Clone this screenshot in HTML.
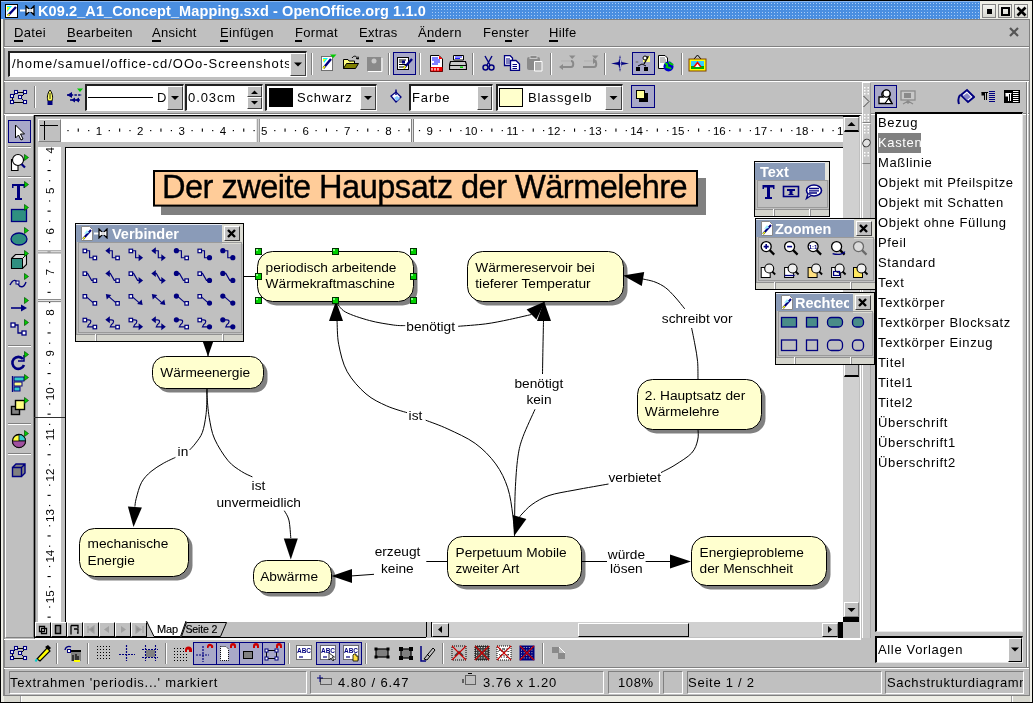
<!DOCTYPE html><html><head><meta charset="utf-8"><style>
html,body{margin:0;padding:0;}
body{width:1033px;height:703px;position:relative;overflow:hidden;will-change:transform;background:#c0c0c0;font-family:"Liberation Sans",sans-serif;}
div,svg{box-sizing:border-box;}
</style></head><body>
<div style="position:absolute;left:0px;top:0px;width:1033px;height:703px;background:#000"></div>
<div style="position:absolute;left:1px;top:1px;width:1031px;height:701px;background:#eeeee6"></div>
<div style="position:absolute;left:3px;top:19px;width:1027px;height:677px;background:#c0c0c0;border-left:2px solid #888;border-top:1px solid #808080;border-right:1px solid #808080;border-bottom:1px solid #808080"></div>
<div style="position:absolute;left:1px;top:1px;width:979px;height:18px;background-color:#4a8ee0"></div>
<div style="position:absolute;left:431px;top:2px;width:549px;height:17px;background-image:radial-gradient(circle at 1.5px 1.5px,#a8ccf8 0.6px,transparent 0.9px);background-size:3px 3px"></div>
<div style="position:absolute;left:1px;top:1px;width:979px;height:1px;background:#8cb8f0"></div>
<div style="position:absolute;left:38px;top:4px;font-size:14.5px;line-height:15px;font-weight:bold;color:#fff;white-space:nowrap;letter-spacing:0.1px">K09.2_A1_Concept_Mapping.sxd - OpenOffice.org 1.1.0</div>
<svg style="position:absolute;left:4px;top:3px;" width="15" height="16" viewBox="0 0 15 16"><rect x="1.5" y="1.5" width="12" height="13" fill="#fff" stroke="#000" stroke-width="1"/><path d="M3 3 L8 3 L3 9Z" fill="#0ff"/><path d="M3 4 H6 L3 8Z" fill="#ff0"/><path d="M4 12.5 L12 4" stroke="#00007f" stroke-width="2.4"/><path d="M3.5 13 L5.5 11" stroke="#ff0" stroke-width="1.6"/></svg>
<svg style="position:absolute;left:20px;top:5px;" width="15" height="11" viewBox="0 0 15 11"><path d="M0 5.5 H6" stroke="#fff" stroke-width="2"/><path d="M6 1 L9 4 V7 L6 10Z M14 1 L11 4 V7 L14 10Z" fill="#fff" stroke="#000" stroke-width="1.3"/><rect x="8" y="4" width="4" height="3" fill="#ddd"/></svg>
<div style="position:absolute;left:982px;top:4px;width:14px;height:14px;background:linear-gradient(#f4f4f0,#d8d8d0);border:1px solid #858585"></div>
<div style="position:absolute;left:998px;top:4px;width:14px;height:14px;background:linear-gradient(#f4f4f0,#d8d8d0);border:1px solid #858585"></div>
<div style="position:absolute;left:1014px;top:4px;width:14px;height:14px;background:linear-gradient(#f4f4f0,#d8d8d0);border:1px solid #858585"></div>
<div style="position:absolute;left:987px;top:9px;width:5px;height:5px;background:#000"></div>
<div style="position:absolute;left:1001px;top:7px;width:9px;height:9px;border:2px solid #000"></div>
<svg style="position:absolute;left:1016px;top:6px;" width="11" height="11" viewBox="0 0 11 11"><path d="M1.5 1.5 L9.5 9.5 M9.5 1.5 L1.5 9.5" stroke="#000" stroke-width="2.6"/></svg>
<div style="position:absolute;left:14px;top:26px;font-size:13px;line-height:13px;color:#000;white-space:nowrap;letter-spacing:0.3px">Datei</div>
<div style="position:absolute;left:67px;top:26px;font-size:13px;line-height:13px;color:#000;white-space:nowrap;letter-spacing:0.3px">Bearbeiten</div>
<div style="position:absolute;left:152px;top:26px;font-size:13px;line-height:13px;color:#000;white-space:nowrap;letter-spacing:0.3px">Ansicht</div>
<div style="position:absolute;left:220px;top:26px;font-size:13px;line-height:13px;color:#000;white-space:nowrap;letter-spacing:0.3px">Einfügen</div>
<div style="position:absolute;left:295px;top:26px;font-size:13px;line-height:13px;color:#000;white-space:nowrap;letter-spacing:0.3px">Format</div>
<div style="position:absolute;left:359px;top:26px;font-size:13px;line-height:13px;color:#000;white-space:nowrap;letter-spacing:0.3px">Extras</div>
<div style="position:absolute;left:418px;top:26px;font-size:13px;line-height:13px;color:#000;white-space:nowrap;letter-spacing:0.3px">Ändern</div>
<div style="position:absolute;left:483px;top:26px;font-size:13px;line-height:13px;color:#000;white-space:nowrap;letter-spacing:0.3px">Fenster</div>
<div style="position:absolute;left:549px;top:26px;font-size:13px;line-height:13px;color:#000;white-space:nowrap;letter-spacing:0.3px">Hilfe</div>
<div style="position:absolute;left:14px;top:40px;width:9px;height:2px;background:#000"></div>
<div style="position:absolute;left:67px;top:40px;width:9px;height:2px;background:#000"></div>
<div style="position:absolute;left:152px;top:40px;width:9px;height:2px;background:#000"></div>
<div style="position:absolute;left:220px;top:40px;width:8px;height:2px;background:#000"></div>
<div style="position:absolute;left:295px;top:40px;width:7px;height:2px;background:#000"></div>
<div style="position:absolute;left:366px;top:40px;width:7px;height:2px;background:#000"></div>
<div style="position:absolute;left:427px;top:40px;width:8px;height:2px;background:#000"></div>
<div style="position:absolute;left:505px;top:40px;width:7px;height:2px;background:#000"></div>
<div style="position:absolute;left:549px;top:40px;width:9px;height:2px;background:#000"></div>
<svg style="position:absolute;left:1009px;top:27px;" width="10" height="10" viewBox="0 0 10 10"><path d="M1 1 L9 9 M9 1 L1 9" stroke="#555" stroke-width="2.2"/></svg>
<div style="position:absolute;left:4px;top:46px;width:1025px;height:1px;background:#808080"></div>
<div style="position:absolute;left:4px;top:47px;width:1025px;height:1px;background:#fff"></div>
<div style="position:absolute;left:4px;top:80px;width:1025px;height:1px;background:#808080"></div>
<div style="position:absolute;left:4px;top:81px;width:1025px;height:1px;background:#fff"></div>
<div style="position:absolute;left:8px;top:51px;width:299px;height:26px;background:#fff;border-top:2px solid #202020;border-left:2px solid #202020;border-right:1px solid #fff;border-bottom:1px solid #fff"></div>
<div style="position:absolute;left:290px;top:53px;width:16px;height:23px;background:#c0c0c0;border-top:1px solid #fff;border-left:1px solid #fff;border-right:1px solid #808080;border-bottom:1px solid #808080;box-sizing:border-box;border-right:1px solid #404040;border-bottom:1px solid #404040"></div>
<svg style="position:absolute;left:290px;top:53px;" width="16" height="23" viewBox="0 0 16 23"><path d="M4.0 9.5 L12.0 9.5 L8.0 13.5Z" fill="#000"/></svg>
<div style="position:absolute;left:12px;top:57px;font-size:13px;line-height:13px;color:#000;white-space:nowrap;letter-spacing:1.0px;width:277px;overflow:hidden">/home/samuel/office-cd/OOo-Screenshots</div>
<div style="position:absolute;left:311px;top:53px;width:1px;height:22px;background:#808080"></div>
<div style="position:absolute;left:312px;top:53px;width:1px;height:22px;background:#fff"></div>
<svg style="position:absolute;left:320px;top:54px;" width="17" height="18" viewBox="0 0 17 18"><path d="M1.5 2.5 H12.5 V16.5 H1.5Z" fill="#fff" stroke="#000" stroke-width="1" stroke-dasharray="1 1"/><path d="M3 4 L8 4 L4 9Z" fill="#0ff"/><path d="M3 5 L6 5 L3 8Z" fill="#ff0"/><path d="M3.5 14 L11 5" stroke="#00007f" stroke-width="2.4"/><path d="M3 14.5 L5 12" stroke="#ff0" stroke-width="1.5"/><path d="M10 0.5 H16.5 L13.2 4Z" fill="#0c0"/></svg>
<svg style="position:absolute;left:342px;top:55px;" width="18" height="16" viewBox="0 0 18 16"><path d="M1.5 4.5 H6 L7 6 H12.5 V13.5 H1.5Z" fill="#ffff80" stroke="#000" stroke-width="1"/><path d="M1.5 13.5 L4.5 8.5 H16.5 L13.5 13.5Z" fill="#808000" stroke="#000" stroke-width="1"/><path d="M10 3 C12 0 15 1 15.5 4" fill="none" stroke="#000" stroke-width="1"/><path d="M14 3.5 L16.5 4 L16 1.5" fill="none" stroke="#000" stroke-width="1"/></svg>
<svg style="position:absolute;left:366px;top:56px;" width="17" height="16" viewBox="0 0 17 16"><rect x="1" y="1" width="14" height="14" fill="#8a8a8a"/><path d="M2 15.5 H16 V2" stroke="#fff" stroke-width="1" fill="none"/><circle cx="8" cy="5" r="2.5" fill="#c8c8c8"/></svg>
<div style="position:absolute;left:388px;top:53px;width:1px;height:22px;background:#808080"></div>
<div style="position:absolute;left:389px;top:53px;width:1px;height:22px;background:#fff"></div>
<div style="position:absolute;left:393px;top:52px;width:23px;height:23px;background:#a8a8c8;border:1px solid #00007f"></div>
<svg style="position:absolute;left:393px;top:52px;" width="23" height="23" viewBox="0 0 23 23"><rect x="4.5" y="5.5" width="11" height="12" fill="#fff" stroke="#000" stroke-width="1"/><path d="M6 8 H13 M6 10 H9 M6 12.5 H13 M6 15 H11" stroke="#000" stroke-width="1"/><rect x="9" y="8.5" width="3" height="3" fill="#00007f"/><path d="M11 16 L19 7" stroke="#00007f" stroke-width="2.4"/><path d="M10.5 16.5 L12.5 14" stroke="#ff0" stroke-width="1.6"/></svg>
<div style="position:absolute;left:419px;top:53px;width:1px;height:22px;background:#808080"></div>
<div style="position:absolute;left:420px;top:53px;width:1px;height:22px;background:#fff"></div>
<svg style="position:absolute;left:429px;top:55px;" width="16" height="17" viewBox="0 0 16 17"><path d="M1.5 0.5 H10 L13.5 4 V16.5 H1.5Z" fill="#fff" stroke="#000" stroke-width="1"/><path d="M10 0.5 L13.5 4 H10Z" fill="#f00"/><path d="M3 3 H9 M3 5 H11 M5 7 H11 M3 9 H9" stroke="#00f" stroke-width="1"/><rect x="1.5" y="12" width="12" height="4.5" fill="#e00"/><path d="M3 13 V15.5 M6 13 V15.5 M9 13 V15.5" stroke="#fff" stroke-width="1.2"/></svg>
<svg style="position:absolute;left:449px;top:55px;" width="18" height="16" viewBox="0 0 18 16"><path d="M4.5 0.5 H14.5 V5 H4.5Z" fill="#fff" stroke="#000" stroke-width="1"/><path d="M6 2 H13 M6 3.5 H11" stroke="#00f" stroke-width="0.9"/><path d="M1.5 6.5 H16.5 L17.5 10 V14.5 H0.5 V10Z" fill="#c8c8c8" stroke="#000" stroke-width="1.2"/><path d="M1 10.5 H17" stroke="#000" stroke-width="1"/><rect x="11" y="11.5" width="3" height="1.5" fill="#0c0"/></svg>
<div style="position:absolute;left:472px;top:53px;width:1px;height:22px;background:#808080"></div>
<div style="position:absolute;left:473px;top:53px;width:1px;height:22px;background:#fff"></div>
<svg style="position:absolute;left:482px;top:55px;" width="13" height="16" viewBox="0 0 13 16"><path d="M3 1 L8 10 M10 1 L5 10" stroke="#00007f" stroke-width="1.4"/><circle cx="3.5" cy="12.5" r="2.5" fill="none" stroke="#00007f" stroke-width="1.5"/><circle cx="9.5" cy="12.5" r="2.5" fill="none" stroke="#00007f" stroke-width="1.5"/></svg>
<svg style="position:absolute;left:503px;top:55px;" width="18" height="16" viewBox="0 0 18 16"><path d="M1.5 0.5 H7 L9.5 3 V10.5 H1.5Z" fill="#fff" stroke="#00007f" stroke-width="1.3"/><path d="M7.5 5.5 H13 L16.5 9 V15.5 H7.5Z" fill="#fff" stroke="#00007f" stroke-width="1.3"/><path d="M3 4 H7 M3 6 H7 M3 8 H7 M9.5 9.5 H14 M9.5 11.5 H14 M9.5 13.5 H14" stroke="#00007f" stroke-width="1"/></svg>
<svg style="position:absolute;left:526px;top:55px;" width="18" height="17" viewBox="0 0 18 17"><rect x="1" y="2" width="13" height="13" rx="2" fill="#8a8a8a"/><rect x="4" y="0.5" width="7" height="3" fill="#8a8a8a" stroke="#c8c8c8"/><path d="M8.5 6.5 H16 V16 H8.5Z" fill="#b0b0b0" stroke="#fff" stroke-width="1"/></svg>
<div style="position:absolute;left:550px;top:53px;width:1px;height:22px;background:#808080"></div>
<div style="position:absolute;left:551px;top:53px;width:1px;height:22px;background:#fff"></div>
<svg style="position:absolute;left:558px;top:55px;" width="18" height="15" viewBox="0 0 18 15"><path d="M3 6 H13 C16 6 16 12 13 12 H2" fill="none" stroke="#8a8a8a" stroke-width="2"/><path d="M3 6 H13" stroke="#fff" stroke-width="0.8"/><path d="M11 0.5 H17.5 L14.2 4Z" fill="#8a8a8a"/><path d="M1 12 L5 9 V15Z" fill="#8a8a8a"/></svg>
<svg style="position:absolute;left:581px;top:55px;" width="18" height="15" viewBox="0 0 18 15"><path d="M3 6 H13 C16 6 16 12 13 12 H2" fill="none" stroke="#8a8a8a" stroke-width="2"/><path d="M3 6 H13" stroke="#fff" stroke-width="0.8"/><path d="M11 0.5 H17.5 L14.2 4Z" fill="#8a8a8a"/><path d="M16 6 L12 3 V9Z" fill="#8a8a8a"/></svg>
<div style="position:absolute;left:604px;top:53px;width:1px;height:22px;background:#808080"></div>
<div style="position:absolute;left:605px;top:53px;width:1px;height:22px;background:#fff"></div>
<svg style="position:absolute;left:611px;top:55px;" width="18" height="17" viewBox="0 0 18 17"><path d="M9 0 L10.5 7 L18 8.5 L10.5 10 L9 17 L7.5 10 L0 8.5 L7.5 7Z" fill="#00007f"/><path d="M9 3 L9.8 8.5 L9 14" stroke="#fff" stroke-width="0.8" fill="none"/></svg>
<div style="position:absolute;left:632px;top:52px;width:23px;height:23px;background:#a8a8c8;border:1px solid #00007f"></div>
<svg style="position:absolute;left:632px;top:52px;" width="23" height="23" viewBox="0 0 23 23"><path d="M11 4 H18 V10 H11Z" fill="#ffff80"/><path d="M13 5 L16 5 L12 12" stroke="#000" stroke-width="1.3" fill="none"/><circle cx="13" cy="6" r="2" fill="#fff" stroke="#000"/><path d="M5 9 V11 M3.5 10 H6.5" stroke="#808080" stroke-width="1.2"/><rect x="4" y="15" width="4" height="4" fill="#000"/><rect x="12" y="15" width="4" height="4" fill="#000"/><path d="M6 14 L10 12 L14 14" stroke="#000" fill="none"/></svg>
<svg style="position:absolute;left:657px;top:55px;" width="17" height="17" viewBox="0 0 17 17"><path d="M1.5 0.5 H8 L10.5 3 V13.5 H1.5Z" fill="#fff" stroke="#000" stroke-width="1"/><path d="M3 3 H8 M3 5 H9 M3 7 H9" stroke="#808080" stroke-width="1"/><circle cx="11.5" cy="11.5" r="5" fill="#00c"/><path d="M8 9 C10 8 11 10 9.5 12 C11 13 13 12 14 14 M12 7 C13 9 15 9 16 10" stroke="#0c0" stroke-width="2" fill="none"/></svg>
<div style="position:absolute;left:681px;top:53px;width:1px;height:22px;background:#808080"></div>
<div style="position:absolute;left:682px;top:53px;width:1px;height:22px;background:#fff"></div>
<svg style="position:absolute;left:688px;top:54px;" width="19" height="18" viewBox="0 0 19 18"><path d="M6 5 L9.5 1 L13 5" fill="none" stroke="#000" stroke-width="1"/><rect x="1" y="5" width="17" height="12" fill="#ff0" stroke="#804000" stroke-width="1"/><rect x="3" y="7" width="13" height="8" fill="#3cf"/><rect x="3" y="12" width="13" height="3" fill="#0a0"/><path d="M6 13 L9.5 8.5 L13 13" fill="#fff" stroke="#e00" stroke-width="1.5"/></svg>
<div style="position:absolute;left:4px;top:113px;width:1025px;height:1px;background:#808080"></div>
<div style="position:absolute;left:4px;top:114px;width:1025px;height:1px;background:#fff"></div>
<svg style="position:absolute;left:9px;top:88px;" width="20" height="18" viewBox="0 0 20 18"><path d="M3.5 8.5 L7.5 4.5 H16.5 L11.5 9.5 L16.5 14.5 H3.5Z" fill="none" stroke="#000" stroke-width="1"/><rect x="1.5" y="6.5" width="3" height="3" fill="#fff" stroke="#00007f" stroke-width="1.1"/><rect x="5.5" y="2.5" width="3" height="3" fill="#fff" stroke="#00007f" stroke-width="1.1"/><rect x="14.5" y="2.5" width="3" height="3" fill="#fff" stroke="#00007f" stroke-width="1.1"/><rect x="9.5" y="7.5" width="3" height="3" fill="#fff" stroke="#00007f" stroke-width="1.1"/><rect x="14.5" y="12.5" width="3" height="3" fill="#fff" stroke="#00007f" stroke-width="1.1"/><rect x="1.5" y="12.5" width="3" height="3" fill="#fff" stroke="#00007f" stroke-width="1.1"/></svg>
<div style="position:absolute;left:34px;top:86px;width:1px;height:22px;background:#808080"></div>
<div style="position:absolute;left:35px;top:86px;width:1px;height:22px;background:#fff"></div>
<svg style="position:absolute;left:45px;top:89px;" width="10" height="17" viewBox="0 0 10 17"><path d="M5 1 C8 5 8 9 7 12 H3 C2 9 2 5 5 1Z" fill="#ffff60" stroke="#000" stroke-width="1"/><path d="M5 4 V10" stroke="#000" stroke-width="0.8"/><rect x="2.5" y="12" width="5" height="4" fill="#00007f"/></svg>
<svg style="position:absolute;left:64px;top:88px;" width="20" height="17" viewBox="0 0 20 17"><path d="M3 7 H18 M6 12 H17" stroke="#00007f" stroke-width="1.4" stroke-dasharray="2.5 1.2"/><path d="M3 7 L8 4 V10Z M7 12 L11 9.5 V14.5Z M11 12 L15 9.5 V14.5Z" fill="#00007f"/><path d="M13 0.5 H19 L16 4Z" fill="#0c0"/></svg>
<div style="position:absolute;left:85px;top:84px;width:99px;height:27px;background:#fff;border-top:2px solid #202020;border-left:2px solid #202020;border-right:1px solid #fff;border-bottom:1px solid #fff"></div>
<div style="position:absolute;left:167px;top:86px;width:16px;height:24px;background:#c0c0c0;border-top:1px solid #fff;border-left:1px solid #fff;border-right:1px solid #808080;border-bottom:1px solid #808080;box-sizing:border-box;border-right:1px solid #404040;border-bottom:1px solid #404040"></div>
<svg style="position:absolute;left:167px;top:86px;" width="16" height="24" viewBox="0 0 16 24"><path d="M4.0 10.0 L12.0 10.0 L8.0 14.0Z" fill="#000"/></svg>
<div style="position:absolute;left:88px;top:97px;width:65px;height:1px;background:#000"></div>
<div style="position:absolute;left:157px;top:91px;font-size:13px;line-height:13px;color:#000;white-space:nowrap;">D</div>
<div style="position:absolute;left:185px;top:84px;width:78px;height:27px;background:#fff;border-top:2px solid #202020;border-left:2px solid #202020;border-right:1px solid #fff;border-bottom:1px solid #fff"></div>
<div style="position:absolute;left:188px;top:91px;font-size:13px;line-height:13px;color:#000;white-space:nowrap;letter-spacing:0.9px">0.03cm</div>
<div style="position:absolute;left:247px;top:86px;width:15px;height:11px;background:#c0c0c0;border-top:1px solid #fff;border-left:1px solid #fff;border-right:1px solid #808080;border-bottom:1px solid #808080;box-sizing:border-box;border-right:1px solid #404040;border-bottom:1px solid #404040"></div>
<div style="position:absolute;left:247px;top:97px;width:15px;height:12px;background:#c0c0c0;border-top:1px solid #fff;border-left:1px solid #fff;border-right:1px solid #808080;border-bottom:1px solid #808080;box-sizing:border-box;border-right:1px solid #404040;border-bottom:1px solid #404040"></div>
<svg style="position:absolute;left:247px;top:86px;" width="15" height="23" viewBox="0 0 15 23"><path d="M4 8 L7.5 4.5 L11 8Z M4 15 L7.5 18.5 L11 15Z" fill="#000"/></svg>
<div style="position:absolute;left:265px;top:84px;width:112px;height:27px;background:#fff;border-top:2px solid #202020;border-left:2px solid #202020;border-right:1px solid #fff;border-bottom:1px solid #fff"></div>
<div style="position:absolute;left:360px;top:86px;width:16px;height:24px;background:#c0c0c0;border-top:1px solid #fff;border-left:1px solid #fff;border-right:1px solid #808080;border-bottom:1px solid #808080;box-sizing:border-box;border-right:1px solid #404040;border-bottom:1px solid #404040"></div>
<svg style="position:absolute;left:360px;top:86px;" width="16" height="24" viewBox="0 0 16 24"><path d="M4.0 10.0 L12.0 10.0 L8.0 14.0Z" fill="#000"/></svg>
<div style="position:absolute;left:269px;top:88px;width:24px;height:19px;background:#000"></div>
<div style="position:absolute;left:297px;top:91px;font-size:13px;line-height:13px;color:#000;white-space:nowrap;letter-spacing:0.8px">Schwarz</div>
<svg style="position:absolute;left:389px;top:89px;" width="15" height="16" viewBox="0 0 15 16"><path d="M2 7 L7 3 L12 8 L7 13Z" fill="#fff" stroke="#00007f" stroke-width="1.3"/><path d="M7 0.5 V6" stroke="#00007f" stroke-width="1.4"/><path d="M5 9 L8 7 L11 9.5 L8 12Z" fill="#8cf"/></svg>
<div style="position:absolute;left:409px;top:84px;width:84px;height:27px;background:#fff;border-top:2px solid #202020;border-left:2px solid #202020;border-right:1px solid #fff;border-bottom:1px solid #fff"></div>
<div style="position:absolute;left:477px;top:86px;width:15px;height:24px;background:#c0c0c0;border-top:1px solid #fff;border-left:1px solid #fff;border-right:1px solid #808080;border-bottom:1px solid #808080;box-sizing:border-box;border-right:1px solid #404040;border-bottom:1px solid #404040"></div>
<svg style="position:absolute;left:477px;top:86px;" width="15" height="24" viewBox="0 0 15 24"><path d="M3.5 10.0 L11.5 10.0 L7.5 14.0Z" fill="#000"/></svg>
<div style="position:absolute;left:412px;top:91px;font-size:13px;line-height:13px;color:#000;white-space:nowrap;letter-spacing:0.9px">Farbe</div>
<div style="position:absolute;left:496px;top:84px;width:127px;height:27px;background:#fff;border-top:2px solid #202020;border-left:2px solid #202020;border-right:1px solid #fff;border-bottom:1px solid #fff"></div>
<div style="position:absolute;left:605px;top:86px;width:17px;height:24px;background:#c0c0c0;border-top:1px solid #fff;border-left:1px solid #fff;border-right:1px solid #808080;border-bottom:1px solid #808080;box-sizing:border-box;border-right:1px solid #404040;border-bottom:1px solid #404040"></div>
<svg style="position:absolute;left:605px;top:86px;" width="17" height="24" viewBox="0 0 17 24"><path d="M4.5 10.0 L12.5 10.0 L8.5 14.0Z" fill="#000"/></svg>
<div style="position:absolute;left:499px;top:88px;width:24px;height:19px;background:#ffffcc;border:1px solid #000"></div>
<div style="position:absolute;left:528px;top:91px;font-size:13px;line-height:13px;color:#000;white-space:nowrap;letter-spacing:0.9px">Blassgelb</div>
<div style="position:absolute;left:631px;top:85px;width:24px;height:23px;background:#a8a8c8;border:1px solid #00007f"></div>
<svg style="position:absolute;left:631px;top:85px;" width="24" height="23" viewBox="0 0 24 23"><rect x="8" y="8" width="9" height="9" fill="#000"/><rect x="5.5" y="5.5" width="8" height="8" fill="#ffff99" stroke="#000" stroke-width="1"/></svg>
<div style="position:absolute;left:5px;top:115px;width:29px;height:523px;border-top:1px solid #fff;border-left:1px solid #fff;border-right:1px solid #808080;border-bottom:1px solid #808080"></div>
<div style="position:absolute;left:8px;top:120px;width:23px;height:23px;background:#a8a8c8;border:1px solid #00007f"></div>
<svg style="position:absolute;left:8px;top:120px;" width="23" height="23" viewBox="0 0 23 23"><path d="M7.5 5 V18 L10.5 15 L13 20 L15 19 L12.5 14 L16.5 14Z" fill="#fff" stroke="#000" stroke-width="1"/></svg>
<div style="position:absolute;left:8px;top:146px;width:23px;height:1px;background:#808080"></div>
<div style="position:absolute;left:8px;top:147px;width:23px;height:1px;background:#fff"></div>
<svg style="position:absolute;left:9px;top:152px;" width="22" height="20" viewBox="0 0 22 20"><path d="M2.5 7.5 H9 V18.5 H2.5Z" fill="#fff" stroke="#000" stroke-width="1.1"/><circle cx="9" cy="8" r="5.5" fill="#fff" stroke="#000" stroke-width="1.1"/><path d="M12.5 12 L16 15.5" stroke="#00007f" stroke-width="2.2"/></svg>
<svg style="position:absolute;left:24px;top:154px;" width="6" height="8" viewBox="0 0 6 8"><path d="M0.5 0.5 L4.5 3.5 L0.5 6.5Z" fill="#0c0" stroke="#005000" stroke-width="0.7"/></svg>
<div style="position:absolute;left:8px;top:176px;width:23px;height:1px;background:#808080"></div>
<div style="position:absolute;left:8px;top:177px;width:23px;height:1px;background:#fff"></div>
<svg style="position:absolute;left:10px;top:182px;" width="16" height="19" viewBox="0 0 16 19"><path d="M2 2 H15 V6 H13.5 V4 H10 V16 H12 V18 H5 V16 H7 V4 H3.5 V6 H2Z" fill="#00007f"/></svg>
<svg style="position:absolute;left:24px;top:181px;" width="6" height="8" viewBox="0 0 6 8"><path d="M0.5 0.5 L4.5 3.5 L0.5 6.5Z" fill="#0c0" stroke="#005000" stroke-width="0.7"/></svg>
<svg style="position:absolute;left:9px;top:205px;" width="20" height="19" viewBox="0 0 20 19"><rect x="2.5" y="4.5" width="15" height="12" fill="#2f8f80" stroke="#00007f" stroke-width="1.3"/></svg>
<svg style="position:absolute;left:24px;top:204px;" width="6" height="8" viewBox="0 0 6 8"><path d="M0.5 0.5 L4.5 3.5 L0.5 6.5Z" fill="#0c0" stroke="#005000" stroke-width="0.7"/></svg>
<svg style="position:absolute;left:9px;top:228px;" width="20" height="19" viewBox="0 0 20 19"><ellipse cx="10" cy="11" rx="8" ry="6" fill="#2f8f80" stroke="#00007f" stroke-width="1.3"/></svg>
<svg style="position:absolute;left:24px;top:227px;" width="6" height="8" viewBox="0 0 6 8"><path d="M0.5 0.5 L4.5 3.5 L0.5 6.5Z" fill="#0c0" stroke="#005000" stroke-width="0.7"/></svg>
<svg style="position:absolute;left:9px;top:251px;" width="20" height="19" viewBox="0 0 20 19"><path d="M2.5 7.5 L6.5 3.5 H17.5 V13.5 L13.5 17.5 H2.5Z" fill="#d8d8d8" stroke="#000" stroke-width="1.1"/><rect x="3" y="8" width="10" height="9" fill="#2f8f80"/><path d="M13.5 7.5 V17.5 M2.5 7.5 H13.5 L17.5 3.5" fill="none" stroke="#000" stroke-width="1"/></svg>
<svg style="position:absolute;left:24px;top:250px;" width="6" height="8" viewBox="0 0 6 8"><path d="M0.5 0.5 L4.5 3.5 L0.5 6.5Z" fill="#0c0" stroke="#005000" stroke-width="0.7"/></svg>
<svg style="position:absolute;left:9px;top:273px;" width="20" height="19" viewBox="0 0 20 19"><path d="M1 12 C4 6 7 6 9 11 C11 15 15 15 17 9" fill="none" stroke="#00007f" stroke-width="1.4"/><rect x="7" y="8" width="3" height="3" fill="#fff" stroke="#00007f"/></svg>
<svg style="position:absolute;left:24px;top:273px;" width="6" height="8" viewBox="0 0 6 8"><path d="M0.5 0.5 L4.5 3.5 L0.5 6.5Z" fill="#0c0" stroke="#005000" stroke-width="0.7"/></svg>
<svg style="position:absolute;left:9px;top:298px;" width="20" height="19" viewBox="0 0 20 19"><path d="M2 10 H15" stroke="#00007f" stroke-width="1.6"/><path d="M18 10 L12 6.5 V13.5Z" fill="#00007f"/></svg>
<svg style="position:absolute;left:24px;top:297px;" width="6" height="8" viewBox="0 0 6 8"><path d="M0.5 0.5 L4.5 3.5 L0.5 6.5Z" fill="#0c0" stroke="#005000" stroke-width="0.7"/></svg>
<svg style="position:absolute;left:9px;top:319px;" width="20" height="20" viewBox="0 0 20 20"><path d="M4.5 6 H9 V14 H14" fill="none" stroke="#00007f" stroke-width="1.3"/><rect x="2" y="4" width="4" height="4" fill="#fff" stroke="#00007f" stroke-width="1.3"/><rect x="13" y="12" width="4" height="4" fill="#fff" stroke="#00007f" stroke-width="1.3"/></svg>
<svg style="position:absolute;left:24px;top:319px;" width="6" height="8" viewBox="0 0 6 8"><path d="M0.5 0.5 L4.5 3.5 L0.5 6.5Z" fill="#0c0" stroke="#005000" stroke-width="0.7"/></svg>
<div style="position:absolute;left:8px;top:345px;width:23px;height:1px;background:#808080"></div>
<div style="position:absolute;left:8px;top:346px;width:23px;height:1px;background:#fff"></div>
<svg style="position:absolute;left:9px;top:351px;" width="20" height="20" viewBox="0 0 20 20"><path d="M14 8 A6 6 0 1 0 15 14" fill="none" stroke="#00007f" stroke-width="2.6"/><path d="M15 4 V10 H9" fill="none" stroke="#00007f" stroke-width="1.5"/></svg>
<svg style="position:absolute;left:24px;top:351px;" width="6" height="8" viewBox="0 0 6 8"><path d="M0.5 0.5 L4.5 3.5 L0.5 6.5Z" fill="#0c0" stroke="#005000" stroke-width="0.7"/></svg>
<svg style="position:absolute;left:9px;top:374px;" width="20" height="20" viewBox="0 0 20 20"><path d="M3.5 2 V18" stroke="#00007f" stroke-width="1.3"/><rect x="5" y="3" width="10" height="4" fill="#3cc" stroke="#00007f"/><rect x="5" y="8" width="8" height="4" fill="#ff8" stroke="#00007f"/><rect x="5" y="13" width="6" height="4" fill="#3cc" stroke="#00007f"/></svg>
<svg style="position:absolute;left:24px;top:374px;" width="6" height="8" viewBox="0 0 6 8"><path d="M0.5 0.5 L4.5 3.5 L0.5 6.5Z" fill="#0c0" stroke="#005000" stroke-width="0.7"/></svg>
<svg style="position:absolute;left:9px;top:397px;" width="20" height="20" viewBox="0 0 20 20"><rect x="2.5" y="9.5" width="8" height="8" fill="#808080" stroke="#000" stroke-width="1.4"/><rect x="6.5" y="3.5" width="9" height="9" fill="#ffff80" stroke="#000" stroke-width="1.4"/></svg>
<svg style="position:absolute;left:24px;top:397px;" width="6" height="8" viewBox="0 0 6 8"><path d="M0.5 0.5 L4.5 3.5 L0.5 6.5Z" fill="#0c0" stroke="#005000" stroke-width="0.7"/></svg>
<div style="position:absolute;left:8px;top:423px;width:23px;height:1px;background:#808080"></div>
<div style="position:absolute;left:8px;top:424px;width:23px;height:1px;background:#fff"></div>
<svg style="position:absolute;left:9px;top:430px;" width="20" height="20" viewBox="0 0 20 20"><circle cx="10" cy="11" r="6.5" fill="#ffff40" stroke="#000" stroke-width="1.3"/><path d="M10 11 V4.5 A6.5 6.5 0 0 1 16.5 11Z" fill="#3cc" stroke="#000" stroke-width="0.8"/><path d="M3.5 11 H16.5 A6.5 6.5 0 0 1 3.5 11Z" fill="#a050a0" stroke="#000" stroke-width="0.8"/></svg>
<svg style="position:absolute;left:24px;top:430px;" width="6" height="8" viewBox="0 0 6 8"><path d="M0.5 0.5 L4.5 3.5 L0.5 6.5Z" fill="#0c0" stroke="#005000" stroke-width="0.7"/></svg>
<div style="position:absolute;left:8px;top:453px;width:23px;height:1px;background:#808080"></div>
<div style="position:absolute;left:8px;top:454px;width:23px;height:1px;background:#fff"></div>
<svg style="position:absolute;left:9px;top:460px;" width="20" height="20" viewBox="0 0 20 20"><path d="M4 7 L7 4 H16 V13 L13 16Z" fill="#909090"/><path d="M3.5 7.5 H12.5 V16.5 H3.5Z M3.5 7.5 L7 4 H16 V13 L12.5 16.5 M12.5 7.5 L16 4" fill="#808080" stroke="#00007f" stroke-width="1.4"/></svg>
<div style="position:absolute;left:34px;top:115px;width:827px;height:524px;background:#c0c0c0;border-top:1px solid #000;border-left:1px solid #000;border-right:1px solid #fff;border-bottom:1px solid #fff"></div>
<div style="position:absolute;left:35px;top:116px;width:1px;height:522px;background:#808080"></div>
<div style="position:absolute;left:35px;top:116px;width:824px;height:1px;background:#808080"></div>
<div style="position:absolute;left:38px;top:119px;width:23px;height:23px;background:#c0c0c0;border-top:1px solid #fff;border-left:1px solid #fff;border-right:1px solid #808080;border-bottom:1px solid #808080;box-sizing:border-box;border-right-color:#808080"></div>
<svg style="position:absolute;left:38px;top:119px;" width="23" height="23" viewBox="0 0 23 23"><path d="M2 6.5 H20 M6.5 2 V21" stroke="#000" stroke-width="1"/></svg>
<div style="position:absolute;left:61px;top:119px;width:782px;height:23px;background:#fff"></div>
<svg style="position:absolute;left:61px;top:119px;font-family:Liberation Sans" width="782" height="23" viewBox="0 0 782 23"><rect x="6.4" y="11" width="1.2" height="1.2" fill="#000"/><rect x="16.7" y="9.5" width="1.1" height="3.2" fill="#000"/><rect x="27.1" y="11" width="1.2" height="1.2" fill="#000"/><text x="37.9" y="15.5" font-size="11.5" text-anchor="middle" fill="#000">1</text><rect x="47.7" y="11" width="1.2" height="1.2" fill="#000"/><rect x="58.1" y="9.5" width="1.1" height="3.2" fill="#000"/><rect x="68.4" y="11" width="1.2" height="1.2" fill="#000"/><text x="79.3" y="15.5" font-size="11.5" text-anchor="middle" fill="#000">2</text><rect x="89.1" y="11" width="1.2" height="1.2" fill="#000"/><rect x="99.4" y="9.5" width="1.1" height="3.2" fill="#000"/><rect x="109.8" y="11" width="1.2" height="1.2" fill="#000"/><text x="120.6" y="15.5" font-size="11.5" text-anchor="middle" fill="#000">3</text><rect x="130.5" y="11" width="1.2" height="1.2" fill="#000"/><rect x="140.8" y="9.5" width="1.1" height="3.2" fill="#000"/><rect x="151.1" y="11" width="1.2" height="1.2" fill="#000"/><text x="162.0" y="15.5" font-size="11.5" text-anchor="middle" fill="#000">4</text><rect x="171.8" y="11" width="1.2" height="1.2" fill="#000"/><rect x="182.2" y="9.5" width="1.1" height="3.2" fill="#000"/><rect x="192.5" y="11" width="1.2" height="1.2" fill="#000"/><text x="203.3" y="15.5" font-size="11.5" text-anchor="middle" fill="#000">5</text><rect x="213.2" y="11" width="1.2" height="1.2" fill="#000"/><rect x="223.5" y="9.5" width="1.1" height="3.2" fill="#000"/><rect x="233.9" y="11" width="1.2" height="1.2" fill="#000"/><text x="244.7" y="15.5" font-size="11.5" text-anchor="middle" fill="#000">6</text><rect x="254.5" y="11" width="1.2" height="1.2" fill="#000"/><rect x="264.9" y="9.5" width="1.1" height="3.2" fill="#000"/><rect x="275.2" y="11" width="1.2" height="1.2" fill="#000"/><text x="286.1" y="15.5" font-size="11.5" text-anchor="middle" fill="#000">7</text><rect x="295.9" y="11" width="1.2" height="1.2" fill="#000"/><rect x="306.2" y="9.5" width="1.1" height="3.2" fill="#000"/><rect x="316.6" y="11" width="1.2" height="1.2" fill="#000"/><text x="327.4" y="15.5" font-size="11.5" text-anchor="middle" fill="#000">8</text><rect x="337.3" y="11" width="1.2" height="1.2" fill="#000"/><rect x="347.6" y="9.5" width="1.1" height="3.2" fill="#000"/><rect x="357.9" y="11" width="1.2" height="1.2" fill="#000"/><text x="368.8" y="15.5" font-size="11.5" text-anchor="middle" fill="#000">9</text><rect x="378.6" y="11" width="1.2" height="1.2" fill="#000"/><rect x="389.0" y="9.5" width="1.1" height="3.2" fill="#000"/><rect x="399.3" y="11" width="1.2" height="1.2" fill="#000"/><text x="410.1" y="15.5" font-size="11.5" text-anchor="middle" fill="#000">10</text><rect x="420.0" y="11" width="1.2" height="1.2" fill="#000"/><rect x="430.3" y="9.5" width="1.1" height="3.2" fill="#000"/><rect x="440.7" y="11" width="1.2" height="1.2" fill="#000"/><text x="451.5" y="15.5" font-size="11.5" text-anchor="middle" fill="#000">11</text><rect x="461.3" y="11" width="1.2" height="1.2" fill="#000"/><rect x="471.7" y="9.5" width="1.1" height="3.2" fill="#000"/><rect x="482.0" y="11" width="1.2" height="1.2" fill="#000"/><text x="492.9" y="15.5" font-size="11.5" text-anchor="middle" fill="#000">12</text><rect x="502.7" y="11" width="1.2" height="1.2" fill="#000"/><rect x="513.0" y="9.5" width="1.1" height="3.2" fill="#000"/><rect x="523.4" y="11" width="1.2" height="1.2" fill="#000"/><text x="534.2" y="15.5" font-size="11.5" text-anchor="middle" fill="#000">13</text><rect x="544.1" y="11" width="1.2" height="1.2" fill="#000"/><rect x="554.4" y="9.5" width="1.1" height="3.2" fill="#000"/><rect x="564.7" y="11" width="1.2" height="1.2" fill="#000"/><text x="575.6" y="15.5" font-size="11.5" text-anchor="middle" fill="#000">14</text><rect x="585.4" y="11" width="1.2" height="1.2" fill="#000"/><rect x="595.8" y="9.5" width="1.1" height="3.2" fill="#000"/><rect x="606.1" y="11" width="1.2" height="1.2" fill="#000"/><text x="616.9" y="15.5" font-size="11.5" text-anchor="middle" fill="#000">15</text><rect x="626.8" y="11" width="1.2" height="1.2" fill="#000"/><rect x="637.1" y="9.5" width="1.1" height="3.2" fill="#000"/><rect x="647.5" y="11" width="1.2" height="1.2" fill="#000"/><text x="658.3" y="15.5" font-size="11.5" text-anchor="middle" fill="#000">16</text><rect x="668.1" y="11" width="1.2" height="1.2" fill="#000"/><rect x="678.5" y="9.5" width="1.1" height="3.2" fill="#000"/><rect x="688.8" y="11" width="1.2" height="1.2" fill="#000"/><text x="699.7" y="15.5" font-size="11.5" text-anchor="middle" fill="#000">17</text><rect x="709.5" y="11" width="1.2" height="1.2" fill="#000"/><rect x="719.8" y="9.5" width="1.1" height="3.2" fill="#000"/><rect x="730.2" y="11" width="1.2" height="1.2" fill="#000"/><text x="741.0" y="15.5" font-size="11.5" text-anchor="middle" fill="#000">18</text><rect x="750.9" y="11" width="1.2" height="1.2" fill="#000"/><rect x="761.2" y="9.5" width="1.1" height="3.2" fill="#000"/><rect x="771.5" y="11" width="1.2" height="1.2" fill="#000"/><text x="782.4" y="15.5" font-size="11.5" text-anchor="middle" fill="#000">19</text><rect x="792.2" y="11" width="1.2" height="1.2" fill="#000"/><rect x="802.6" y="9.5" width="1.1" height="3.2" fill="#000"/><rect x="812.9" y="11" width="1.2" height="1.2" fill="#000"/><rect x="195.8" y="0" width="1" height="23" fill="#808080"/><rect x="196.8" y="0" width="1" height="23" fill="#e0e0e0"/><rect x="197.8" y="0" width="1" height="23" fill="#808080"/><rect x="350.0" y="0" width="1" height="23" fill="#808080"/><rect x="351.0" y="0" width="1" height="23" fill="#e0e0e0"/><rect x="352.0" y="0" width="1" height="23" fill="#808080"/></svg>
<div style="position:absolute;left:38px;top:147px;width:23px;height:475px;background:#fff"></div>
<svg style="position:absolute;left:38px;top:147px;font-family:Liberation Sans" width="23" height="475" viewBox="0 0 23 475"><text x="0" y="0" transform="translate(15.5 -37.4) rotate(-90)" font-size="11.5" text-anchor="middle" fill="#000">3</text><rect x="11" y="-27.8" width="1.2" height="1.2" fill="#000"/><rect x="9.5" y="-17.6" width="3.2" height="1.1" fill="#000"/><rect x="11" y="-7.5" width="1.2" height="1.2" fill="#000"/><text x="0" y="0" transform="translate(15.5 3.2) rotate(-90)" font-size="11.5" text-anchor="middle" fill="#000">4</text><rect x="11" y="12.8" width="1.2" height="1.2" fill="#000"/><rect x="9.5" y="23.0" width="3.2" height="1.1" fill="#000"/><rect x="11" y="33.1" width="1.2" height="1.2" fill="#000"/><text x="0" y="0" transform="translate(15.5 43.8) rotate(-90)" font-size="11.5" text-anchor="middle" fill="#000">5</text><rect x="11" y="53.4" width="1.2" height="1.2" fill="#000"/><rect x="9.5" y="63.6" width="3.2" height="1.1" fill="#000"/><rect x="11" y="73.7" width="1.2" height="1.2" fill="#000"/><text x="0" y="0" transform="translate(15.5 84.4) rotate(-90)" font-size="11.5" text-anchor="middle" fill="#000">6</text><rect x="11" y="94.0" width="1.2" height="1.2" fill="#000"/><rect x="9.5" y="104.2" width="3.2" height="1.1" fill="#000"/><rect x="11" y="114.3" width="1.2" height="1.2" fill="#000"/><text x="0" y="0" transform="translate(15.5 125.0) rotate(-90)" font-size="11.5" text-anchor="middle" fill="#000">7</text><rect x="11" y="134.7" width="1.2" height="1.2" fill="#000"/><rect x="9.5" y="144.8" width="3.2" height="1.1" fill="#000"/><rect x="11" y="154.9" width="1.2" height="1.2" fill="#000"/><text x="0" y="0" transform="translate(15.5 165.6) rotate(-90)" font-size="11.5" text-anchor="middle" fill="#000">8</text><rect x="11" y="175.3" width="1.2" height="1.2" fill="#000"/><rect x="9.5" y="185.4" width="3.2" height="1.1" fill="#000"/><rect x="11" y="195.6" width="1.2" height="1.2" fill="#000"/><text x="0" y="0" transform="translate(15.5 206.2) rotate(-90)" font-size="11.5" text-anchor="middle" fill="#000">9</text><rect x="11" y="215.8" width="1.2" height="1.2" fill="#000"/><rect x="9.5" y="226.0" width="3.2" height="1.1" fill="#000"/><rect x="11" y="236.1" width="1.2" height="1.2" fill="#000"/><text x="0" y="0" transform="translate(15.5 246.8) rotate(-90)" font-size="11.5" text-anchor="middle" fill="#000">10</text><rect x="11" y="256.4" width="1.2" height="1.2" fill="#000"/><rect x="9.5" y="266.6" width="3.2" height="1.1" fill="#000"/><rect x="11" y="276.8" width="1.2" height="1.2" fill="#000"/><text x="0" y="0" transform="translate(15.5 287.4) rotate(-90)" font-size="11.5" text-anchor="middle" fill="#000">11</text><rect x="11" y="297.0" width="1.2" height="1.2" fill="#000"/><rect x="9.5" y="307.2" width="3.2" height="1.1" fill="#000"/><rect x="11" y="317.3" width="1.2" height="1.2" fill="#000"/><text x="0" y="0" transform="translate(15.5 328.0) rotate(-90)" font-size="11.5" text-anchor="middle" fill="#000">12</text><rect x="11" y="337.6" width="1.2" height="1.2" fill="#000"/><rect x="9.5" y="347.8" width="3.2" height="1.1" fill="#000"/><rect x="11" y="357.9" width="1.2" height="1.2" fill="#000"/><text x="0" y="0" transform="translate(15.5 368.6) rotate(-90)" font-size="11.5" text-anchor="middle" fill="#000">13</text><rect x="11" y="378.2" width="1.2" height="1.2" fill="#000"/><rect x="9.5" y="388.4" width="3.2" height="1.1" fill="#000"/><rect x="11" y="398.6" width="1.2" height="1.2" fill="#000"/><text x="0" y="0" transform="translate(15.5 409.2) rotate(-90)" font-size="11.5" text-anchor="middle" fill="#000">14</text><rect x="11" y="418.9" width="1.2" height="1.2" fill="#000"/><rect x="9.5" y="429.0" width="3.2" height="1.1" fill="#000"/><rect x="11" y="439.2" width="1.2" height="1.2" fill="#000"/><text x="0" y="0" transform="translate(15.5 449.8) rotate(-90)" font-size="11.5" text-anchor="middle" fill="#000">15</text><rect x="11" y="459.4" width="1.2" height="1.2" fill="#000"/><rect x="9.5" y="469.6" width="3.2" height="1.1" fill="#000"/><rect x="11" y="479.7" width="1.2" height="1.2" fill="#000"/><text x="0" y="0" transform="translate(15.5 490.4) rotate(-90)" font-size="11.5" text-anchor="middle" fill="#000">16</text><rect x="11" y="500.1" width="1.2" height="1.2" fill="#000"/><rect x="9.5" y="510.2" width="3.2" height="1.1" fill="#000"/><rect x="11" y="520.4" width="1.2" height="1.2" fill="#000"/><rect x="0" y="103.4" width="23" height="1" fill="#808080"/><rect x="0" y="104.4" width="23" height="1" fill="#e0e0e0"/><rect x="0" y="105.4" width="23" height="1" fill="#808080"/><rect x="0" y="152.1" width="23" height="1" fill="#808080"/><rect x="0" y="153.1" width="23" height="1" fill="#e0e0e0"/><rect x="0" y="154.1" width="23" height="1" fill="#808080"/></svg>
<div style="position:absolute;left:34px;top:417px;width:31px;height:1px;background:#303030"></div>
<div style="position:absolute;left:65px;top:147px;width:778px;height:475px;background:#fff;border-top:1px solid #000;border-left:1px solid #000"></div>
<div style="position:absolute;left:843px;top:116px;width:16px;height:506px;background:#d0d0d0"></div>
<div style="position:absolute;left:843px;top:116px;width:16px;height:1px;background:#000"></div>
<div style="position:absolute;left:844px;top:117px;width:15px;height:15px;background:#c0c0c0;border-top:1px solid #fff;border-left:1px solid #fff;border-right:1px solid #808080;border-bottom:1px solid #808080;box-sizing:border-box;border-bottom:2px solid #000;border-right:1px solid #808080"></div>
<svg style="position:absolute;left:844px;top:117px;" width="15" height="15" viewBox="0 0 15 15"><path d="M3.5 9 L7.5 5 L11.5 9Z" fill="#000"/></svg>
<div style="position:absolute;left:844px;top:602px;width:15px;height:15px;background:#c0c0c0;border-top:1px solid #fff;border-left:1px solid #fff;border-right:1px solid #808080;border-bottom:1px solid #808080;box-sizing:border-box;border-bottom:1px solid #808080"></div>
<svg style="position:absolute;left:844px;top:602px;" width="15" height="15" viewBox="0 0 15 15"><path d="M3.5 6 L7.5 10 L11.5 6Z" fill="#000"/></svg>
<div style="position:absolute;left:843px;top:617px;width:16px;height:5px;background:#000"></div>
<div style="position:absolute;left:844px;top:292px;width:15px;height:85px;background:#c0c0c0;border-top:1px solid #fff;border-left:1px solid #fff;border-right:1px solid #808080;border-bottom:1px solid #808080;box-sizing:border-box;border-bottom:2px solid #000;border-right:1px solid #404040"></div>
<div style="position:absolute;left:35px;top:622px;width:808px;height:16px;background:#c0c0c0"></div>
<div style="position:absolute;left:35px;top:637px;width:391px;height:1px;background:#000"></div>
<div style="position:absolute;left:35px;top:622px;width:16px;height:15px;background:#c0c0c0;border-top:1px solid #fff;border-left:1px solid #fff;border-right:1px solid #808080;border-bottom:1px solid #808080;box-sizing:border-box;border-bottom:1px solid #000;border-right:1px solid #000"></div>
<div style="position:absolute;left:51px;top:622px;width:16px;height:15px;background:#c0c0c0;border-top:1px solid #fff;border-left:1px solid #fff;border-right:1px solid #808080;border-bottom:1px solid #808080;box-sizing:border-box;border-bottom:1px solid #000;border-right:1px solid #000"></div>
<div style="position:absolute;left:67px;top:622px;width:16px;height:15px;background:#c0c0c0;border-top:1px solid #fff;border-left:1px solid #fff;border-right:1px solid #808080;border-bottom:1px solid #808080;box-sizing:border-box;border-bottom:1px solid #000;border-right:1px solid #000"></div>
<div style="position:absolute;left:83px;top:622px;width:16px;height:15px;background:#c0c0c0;border-top:1px solid #fff;border-left:1px solid #fff;border-right:1px solid #808080;border-bottom:1px solid #808080;box-sizing:border-box;border-bottom:1px solid #000;border-right:1px solid #000"></div>
<div style="position:absolute;left:99px;top:622px;width:16px;height:15px;background:#c0c0c0;border-top:1px solid #fff;border-left:1px solid #fff;border-right:1px solid #808080;border-bottom:1px solid #808080;box-sizing:border-box;border-bottom:1px solid #000;border-right:1px solid #000"></div>
<div style="position:absolute;left:115px;top:622px;width:16px;height:15px;background:#c0c0c0;border-top:1px solid #fff;border-left:1px solid #fff;border-right:1px solid #808080;border-bottom:1px solid #808080;box-sizing:border-box;border-bottom:1px solid #000;border-right:1px solid #000"></div>
<div style="position:absolute;left:131px;top:622px;width:16px;height:15px;background:#c0c0c0;border-top:1px solid #fff;border-left:1px solid #fff;border-right:1px solid #808080;border-bottom:1px solid #808080;box-sizing:border-box;border-bottom:1px solid #000;border-right:1px solid #000"></div>
<svg style="position:absolute;left:35px;top:622px;" width="112" height="15" viewBox="0 0 112 15"><path d="M4.5 4.5h5v5h-5z M6.5 6.5h5v5h-5z" fill="#fff" stroke="#000" stroke-width="1.3"/><path d="M20.5 3.5h5v8h-5z" fill="#888" stroke="#000" stroke-width="1.5"/><path d="M36 3.5h7v2.5 M36 3.5v9 M39 7h4v4h-1" fill="none" stroke="#000" stroke-width="1.3"/><path d="M53 4v7 M59 4 L54 7.5 L59 11Z" fill="#909090" stroke="#a0a0a0" stroke-width="1.2"/><path d="M74 4 L69 7.5 L74 11Z" fill="#a0a0a0"/><path d="M86 4 L91 7.5 L86 11Z" fill="#a0a0a0"/><path d="M108 4v7 M101 4 L106 7.5 L101 11Z" fill="#909090" stroke="#a0a0a0" stroke-width="1.2"/></svg>
<svg style="position:absolute;left:146px;top:621px;font-family:Liberation Sans" width="82" height="17" viewBox="0 0 82 17"><path d="M35.5 15.5 L40.5 1.5 H80.5 L74.5 15.5 Z" fill="#c0c0c0" stroke="#000" stroke-width="1"/><path d="M0.5 0 L8 15.5 H34.5 L40 0Z" fill="#fff"/><path d="M0.5 0 L8 15.5 H34.5 L40 0" fill="none" stroke="#000" stroke-width="1"/><text x="11" y="12.2" font-size="11" fill="#000" stroke="#000" stroke-width="0.15" letter-spacing="-0.1">Map</text><text x="39.5" y="12.2" font-size="10.6" fill="#000" stroke="#000" stroke-width="0.15" letter-spacing="-0.2">Seite 2</text></svg>
<div style="position:absolute;left:426px;top:622px;width:6px;height:15px;border-left:1px solid #fff;border-right:1px solid #000;background:#c0c0c0"></div>
<div style="position:absolute;left:426px;top:622px;width:1px;height:15px;background:#000"></div>
<div style="position:absolute;left:449px;top:622px;width:394px;height:15px;background:#d0d0d0"></div>
<div style="position:absolute;left:432px;top:623px;width:17px;height:14px;background:#c0c0c0;border-top:1px solid #fff;border-left:1px solid #fff;border-right:1px solid #808080;border-bottom:1px solid #808080;box-sizing:border-box;border-bottom:1px solid #000;border-right:1px solid #000"></div>
<svg style="position:absolute;left:432px;top:623px;" width="17" height="14" viewBox="0 0 17 14"><path d="M10 3 L6 6.5 L10 10Z" fill="#000"/></svg>
<div style="position:absolute;left:578px;top:623px;width:111px;height:14px;background:#c0c0c0;border-top:1px solid #fff;border-left:1px solid #fff;border-right:1px solid #808080;border-bottom:1px solid #808080;box-sizing:border-box;border-bottom:1px solid #000;border-right:1px solid #000"></div>
<div style="position:absolute;left:822px;top:623px;width:16px;height:14px;background:#c0c0c0;border-top:1px solid #fff;border-left:1px solid #fff;border-right:1px solid #808080;border-bottom:1px solid #808080;box-sizing:border-box;border-bottom:1px solid #000;border-right:1px solid #808080"></div>
<svg style="position:absolute;left:822px;top:623px;" width="16" height="14" viewBox="0 0 16 14"><path d="M6 3 L10 6.5 L6 10Z" fill="#000"/></svg>
<div style="position:absolute;left:838px;top:622px;width:5px;height:16px;background:#000"></div>
<div style="position:absolute;left:66px;top:148px;width:777px;height:474px;overflow:hidden">
<svg style="position:absolute;left:-66px;top:-148px" width="1033" height="703" viewBox="0 0 1033 703" font-family="Liberation Sans, sans-serif"><rect x="161" y="178" width="545" height="37" fill="#808080"/><rect x="154" y="171" width="543" height="34.6" fill="#ffcc99" stroke="#000" stroke-width="2"/><text x="162" y="197.6" font-size="32.6" letter-spacing="-0.53" fill="#000" stroke="#000" stroke-width="0.35">Der zweite Haupsatz der Wärmelehre</text><rect x="261.5" y="255.5" width="156" height="50" rx="15" fill="#808080"/><rect x="257.5" y="251.5" width="156" height="50" rx="15" fill="#ffffcf" stroke="#000" stroke-width="1"/><text x="265.6" y="272.2" font-size="13.7" letter-spacing="0" fill="#000">periodisch arbeitende</text><text x="265.6" y="288.4" font-size="13.7" letter-spacing="0" fill="#000">Wärmekraftmaschine</text><rect x="471.5" y="255.5" width="156" height="50" rx="15" fill="#808080"/><rect x="467.5" y="251.5" width="156" height="50" rx="15" fill="#ffffcf" stroke="#000" stroke-width="1"/><text x="475.3" y="271.9" font-size="13.7" letter-spacing="0" fill="#000">Wärmereservoir bei</text><text x="475.3" y="288.1" font-size="13.7" letter-spacing="0" fill="#000">tieferer Temperatur</text><rect x="156.5" y="360.5" width="111" height="32" rx="13" fill="#808080"/><rect x="152.5" y="356.5" width="111" height="32" rx="13" fill="#ffffcf" stroke="#000" stroke-width="1"/><text x="160.3" y="376.6" font-size="13.7" letter-spacing="0" fill="#000">Wärmeenergie</text><rect x="641.5" y="383.5" width="124" height="50" rx="15" fill="#808080"/><rect x="637.5" y="379.5" width="124" height="50" rx="15" fill="#ffffcf" stroke="#000" stroke-width="1"/><text x="644.8" y="399.7" font-size="13.7" letter-spacing="0" fill="#000">2. Hauptsatz der</text><text x="644.8" y="415.9" font-size="13.7" letter-spacing="0" fill="#000">Wärmelehre</text><rect x="83.5" y="532.5" width="109" height="48" rx="15" fill="#808080"/><rect x="79.5" y="528.5" width="109" height="48" rx="15" fill="#ffffcf" stroke="#000" stroke-width="1"/><text x="87.6" y="548.3" font-size="13.7" letter-spacing="0" fill="#000">mechanische</text><text x="87.6" y="564.5" font-size="13.7" letter-spacing="0" fill="#000">Energie</text><rect x="257.5" y="564.5" width="78" height="32" rx="13" fill="#808080"/><rect x="253.5" y="560.5" width="78" height="32" rx="13" fill="#ffffcf" stroke="#000" stroke-width="1"/><text x="260.2" y="580.5" font-size="13.7" letter-spacing="0" fill="#000">Abwärme</text><rect x="451.5" y="540.5" width="134" height="49" rx="15" fill="#808080"/><rect x="447.5" y="536.5" width="134" height="49" rx="15" fill="#ffffcf" stroke="#000" stroke-width="1"/><text x="455.5" y="556.5" font-size="13.7" letter-spacing="0" fill="#000">Perpetuum Mobile</text><text x="455.5" y="572.7" font-size="13.7" letter-spacing="0" fill="#000">zweiter Art</text><rect x="695.5" y="540.5" width="135" height="49" rx="15" fill="#808080"/><rect x="691.5" y="536.5" width="135" height="49" rx="15" fill="#ffffcf" stroke="#000" stroke-width="1"/><text x="699.6" y="556.5" font-size="13.7" letter-spacing="0" fill="#000">Energieprobleme</text><text x="699.6" y="572.7" font-size="13.7" letter-spacing="0" fill="#000">der Menschheit</text><path d="M336.0 301.7 C337.6 303.4 339.9 308.9 345.5 312.0 C351.1 315.1 361.4 318.3 369.4 320.5 C377.4 322.7 387.3 324.1 393.3 325.0 C399.3 325.9 403.2 325.5 405.2 325.6" fill="none" stroke="#000" stroke-width="1"/><path d="M458.2 326.3 C462.8 325.9 477.0 325.0 485.5 323.9 C494.0 322.8 501.7 321.1 509.4 319.5 C517.1 317.9 527.8 315.3 531.5 314.5" fill="none" stroke="#000" stroke-width="1"/><path d="M545.0 301.5 L536.4 319.5 L526.6 309.5Z" fill="#000"/><text x="406.3" y="330.5" font-size="13.7" fill="#000">benötigt</text><path d="M336.0 320.5 C336.2 320.5 336.6 316.5 337.0 320.5 C337.4 324.5 337.0 335.9 338.7 344.4 C340.4 352.9 342.6 363.4 347.2 371.7 C351.8 379.9 359.4 388.2 366.0 393.9 C372.6 399.6 379.7 402.7 386.5 405.8 C393.3 408.9 403.6 411.6 407.0 412.7" fill="none" stroke="#000" stroke-width="1"/><path d="M425.7 420.2 C429.4 421.7 439.6 425.1 447.9 429.0 C456.1 432.9 467.2 437.6 475.2 443.4 C483.2 449.2 490.3 456.5 495.7 463.9 C501.1 471.3 504.9 479.3 507.7 487.8 C510.5 496.3 511.7 507.0 512.8 515.0 C513.9 523.0 514.2 532.2 514.5 535.6" fill="none" stroke="#000" stroke-width="1"/><path d="M336.0 301.0 L343.0 321.0 L329.0 321.0Z" fill="#000"/><text x="408.6" y="419.5" font-size="13.7" fill="#000">ist</text><path d="M543.5 320.5 C543.4 324.6 543.2 336.1 543.0 345.0 C542.8 353.9 542.6 369.2 542.5 374.0" fill="none" stroke="#000" stroke-width="1"/><path d="M535.0 409.3 C533.0 413.9 525.9 428.7 523.0 436.6 C520.1 444.6 519.2 447.9 517.9 457.0 C516.6 466.1 515.8 478.1 515.2 491.2 C514.6 504.3 514.6 528.2 514.5 535.6" fill="none" stroke="#000" stroke-width="1"/><path d="M544.0 301.0 L551.0 321.0 L537.0 321.0Z" fill="#000"/><text x="514.5" y="388" font-size="13.7" fill="#000">benötigt</text><text x="526.4" y="404" font-size="13.7" fill="#000">kein</text><path d="M698.0 429.0 C698.0 430.8 698.8 436.0 697.7 440.0 C696.7 444.0 695.5 448.8 691.7 453.0 C687.9 457.2 680.1 461.7 675.0 465.0 C669.9 468.3 663.3 471.3 661.0 472.6" fill="none" stroke="#000" stroke-width="1"/><path d="M608.5 484.0 C602.9 485.0 584.9 488.1 575.0 490.0 C565.1 491.9 556.2 493.1 549.0 495.5 C541.8 497.9 536.5 501.4 532.0 504.5 C527.5 507.6 524.1 511.9 522.0 514.0 C519.9 516.1 520.0 516.5 519.6 517.0" fill="none" stroke="#000" stroke-width="1"/><path d="M514.5 535.6 L512.8 515.1 L526.4 518.9Z" fill="#000"/><text x="608.5" y="482" font-size="13.7" fill="#000">verbietet</text><path d="M698.0 379.0 C697.9 376.1 698.1 367.2 697.6 361.5 C697.1 355.8 696.0 350.6 695.0 345.0 C694.0 339.4 692.2 330.8 691.6 328.0" fill="none" stroke="#000" stroke-width="1"/><path d="M684.7 308.8 C683.1 306.8 678.2 300.5 675.0 297.0 C671.8 293.5 669.0 290.3 665.7 287.8 C662.4 285.3 658.8 283.5 655.0 282.0 C651.2 280.5 645.0 279.5 643.0 279.0" fill="none" stroke="#000" stroke-width="1"/><path d="M623.0 275.5 L644.2 272.1 L641.8 285.9Z" fill="#000"/><text x="661.8" y="322.7" font-size="13.7" fill="#000">schreibt vor</text><path d="M207.0 389.0 C207.0 390.1 207.2 391.5 207.0 395.8 C206.8 400.1 206.8 408.6 206.0 414.7 C205.2 420.8 204.1 427.6 202.4 432.3 C200.7 437.0 197.8 440.2 195.7 443.1 C193.6 446.0 190.7 448.8 189.7 449.9" fill="none" stroke="#000" stroke-width="1"/><path d="M175.4 457.4 C173.4 458.4 167.3 461.0 163.2 463.4 C159.1 465.8 154.6 468.4 151.0 471.5 C147.4 474.6 144.1 477.8 141.6 482.3 C139.1 486.8 137.3 494.4 136.2 498.5 C135.1 502.6 135.1 505.2 134.9 506.6" fill="none" stroke="#000" stroke-width="1"/><path d="M133.5 527.0 L127.9 506.5 L141.9 507.5Z" fill="#000"/><text x="177.6" y="455.8" font-size="13.7" fill="#000">in</text><path d="M207.0 389.0 C207.0 390.1 206.6 391.1 207.0 395.8 C207.4 400.5 207.9 410.2 209.2 417.4 C210.5 424.6 211.4 431.8 214.6 439.0 C217.8 446.2 223.6 455.3 228.1 460.7 C232.6 466.1 237.5 468.8 241.6 471.5 C245.7 474.2 250.6 476.0 252.4 476.9" fill="none" stroke="#000" stroke-width="1"/><path d="M284.3 510.7 C285.1 512.3 287.8 515.6 288.9 520.1 C290.0 524.6 290.5 535.0 290.8 538.0" fill="none" stroke="#000" stroke-width="1"/><path d="M290.8 559.5 L283.8 538.5 L297.8 538.5Z" fill="#000"/><text x="251.6" y="490.4" font-size="13.7" fill="#000">ist</text><text x="216.5" y="506.6" font-size="13.7" fill="#000">unvermeidlich</text><path d="M426.3 561.5 H447.7" stroke="#000" stroke-width="1"/><path d="M374 574.3 L352 575.9" stroke="#000" stroke-width="1"/><path d="M331.5 576.0 L352.0 569.0 L352.0 583.0Z" fill="#000"/><text x="374.7" y="556.4" font-size="13.7" fill="#000">erzeugt</text><text x="381" y="572.5" font-size="13.7" fill="#000">keine</text><path d="M581 561.5 H607 M645.6 561.5 H670" stroke="#000" stroke-width="1"/><path d="M691.0 561.5 L670.0 568.5 L670.0 554.5Z" fill="#000"/><text x="607.8" y="558.5" font-size="13.7" fill="#000">würde</text><text x="610" y="572.8" font-size="13.7" fill="#000">lösen</text><path d="M243 276.5 H257 M208 340 V356" stroke="#000" stroke-width="1"/><path d="M208.0 356.5 L201.0 336.5 L215.0 336.5Z" fill="#000"/><rect x="255.5" y="248.5" width="6" height="6" fill="#00d000" stroke="#003000" stroke-width="1"/><rect x="256" y="249" width="2" height="2" fill="#80ff80"/><rect x="255.5" y="273.5" width="6" height="6" fill="#00d000" stroke="#003000" stroke-width="1"/><rect x="256" y="274" width="2" height="2" fill="#80ff80"/><rect x="255.5" y="297.5" width="6" height="6" fill="#00d000" stroke="#003000" stroke-width="1"/><rect x="256" y="298" width="2" height="2" fill="#80ff80"/><rect x="332.5" y="248.5" width="6" height="6" fill="#00d000" stroke="#003000" stroke-width="1"/><rect x="333" y="249" width="2" height="2" fill="#80ff80"/><rect x="332.5" y="297.5" width="6" height="6" fill="#00d000" stroke="#003000" stroke-width="1"/><rect x="333" y="298" width="2" height="2" fill="#80ff80"/><rect x="410.5" y="248.5" width="6" height="6" fill="#00d000" stroke="#003000" stroke-width="1"/><rect x="411" y="249" width="2" height="2" fill="#80ff80"/><rect x="410.5" y="273.5" width="6" height="6" fill="#00d000" stroke="#003000" stroke-width="1"/><rect x="411" y="274" width="2" height="2" fill="#80ff80"/><rect x="410.5" y="297.5" width="6" height="6" fill="#00d000" stroke="#003000" stroke-width="1"/><rect x="411" y="298" width="2" height="2" fill="#80ff80"/></svg>
</div>
<div style="position:absolute;left:862px;top:82px;width:9px;height:556px;background:#c8c8c8;border-left:1px solid #fff;border-right:1px solid #a8a8a8"></div>
<div style="position:absolute;left:862px;top:82px;width:9px;height:41px;background:#c8c8c8;border-top:1px solid #fff;border-left:1px solid #fff;border-right:1px solid #808080;border-bottom:1px solid #808080;box-sizing:border-box;border-right-color:#a0a0a0"></div>
<div style="position:absolute;left:862px;top:123px;width:9px;height:41px;background:#c8c8c8;border-top:1px solid #fff;border-left:1px solid #fff;border-right:1px solid #808080;border-bottom:1px solid #808080;box-sizing:border-box;border-right-color:#a0a0a0"></div>
<svg style="position:absolute;left:862px;top:84px;" width="9" height="80" viewBox="0 0 9 80"><g fill="#fff"><rect x="2" y="3" width="1.5" height="1.5"/><rect x="2" y="6" width="1.5" height="1.5"/><rect x="2" y="9" width="1.5" height="1.5"/><rect x="2" y="30" width="1.5" height="1.5"/><rect x="2" y="33" width="1.5" height="1.5"/><rect x="2" y="36" width="1.5" height="1.5"/><rect x="2" y="42" width="1.5" height="1.5"/><rect x="2" y="45" width="1.5" height="1.5"/><rect x="2" y="48" width="1.5" height="1.5"/><rect x="2" y="68" width="1.5" height="1.5"/><rect x="2" y="71" width="1.5" height="1.5"/><rect x="5.5" y="3" width="1.5" height="1.5"/><rect x="5.5" y="6" width="1.5" height="1.5"/><rect x="5.5" y="9" width="1.5" height="1.5"/><rect x="5.5" y="30" width="1.5" height="1.5"/><rect x="5.5" y="33" width="1.5" height="1.5"/><rect x="5.5" y="36" width="1.5" height="1.5"/><rect x="5.5" y="42" width="1.5" height="1.5"/><rect x="5.5" y="45" width="1.5" height="1.5"/><rect x="5.5" y="48" width="1.5" height="1.5"/><rect x="5.5" y="68" width="1.5" height="1.5"/><rect x="5.5" y="71" width="1.5" height="1.5"/></g><path d="M1.5 12 L7 17.5 L1.5 23" fill="#d8d8d8" stroke="#404040" stroke-width="1"/><ellipse cx="4.5" cy="59" rx="3.5" ry="4" fill="#e0e0e0" stroke="#303030" stroke-width="1" transform="rotate(40 4.5 59)"/></svg>
<div style="position:absolute;left:1026px;top:82px;width:1px;height:586px;background:#808080"></div>
<div style="position:absolute;left:1027px;top:82px;width:1px;height:586px;background:#fff"></div>
<div style="position:absolute;left:874px;top:85px;width:23px;height:23px;background:#a8a8c8;border:1px solid #00007f"></div>
<svg style="position:absolute;left:874px;top:85px;" width="23" height="23" viewBox="0 0 23 23"><path d="M5 18.5 V12 H9 A4 4 0 1 1 15 12 L18 18.5Z" fill="#fff" stroke="#000" stroke-width="1.3"/><circle cx="12.5" cy="8.5" r="3.6" fill="#fff" stroke="#000" stroke-width="1.3"/><path d="M11 18.5 L14.5 13.5 L18 18.5Z" fill="#fff" stroke="#000" stroke-width="1.2"/></svg>
<svg style="position:absolute;left:899px;top:89px;" width="18" height="16" viewBox="0 0 18 16"><rect x="2" y="2" width="14" height="9" fill="#c8c8c8" stroke="#8a8a8a" stroke-width="1.3"/><rect x="5" y="4" width="7" height="5" fill="#8a8a8a"/><path d="M9 11 V15 M9 12 L4 15 M9 12 L14 15" stroke="#8a8a8a" stroke-width="1.2"/></svg>
<svg style="position:absolute;left:957px;top:87px;" width="18" height="18" viewBox="0 0 18 18"><path d="M4 8 L10 3 L17 10 L11 15Z" fill="#fff" stroke="#00007f" stroke-width="2"/><path d="M3 8 C1 11 1 14 2 17" stroke="#00007f" stroke-width="2" fill="none"/><path d="M6 9 L10 6 L14 10 L10 13Z" fill="#8888c8"/></svg>
<svg style="position:absolute;left:981px;top:90px;" width="16" height="13" viewBox="0 0 16 13"><path d="M0.5 2.5 H7 M3.5 2 V10 M5.5 2 V10" stroke="#000" stroke-width="1"/><rect x="0.5" y="2.5" width="2.5" height="3" fill="#000"/><path d="M8 1.5 H14 M8 3.5 H14 M8 5.5 H14 M8 7.5 H14 M8 9.5 H14 M8 11.5 H14" stroke="#00007f" stroke-width="1.1"/></svg>
<svg style="position:absolute;left:1004px;top:90px;" width="16" height="13" viewBox="0 0 16 13"><rect x="0" y="0" width="16" height="13" fill="#000"/><path d="M1.5 3.5 H7.5 M4.5 3 V11 M6.5 3 V11" stroke="#fff" stroke-width="1"/><rect x="1.5" y="3.5" width="2.5" height="3" fill="#fff"/><path d="M9 1.5 H14.5 M9 3.5 H14.5 M9 5.5 H14.5 M9 7.5 H14.5 M9 9.5 H14.5 M9 11.5 H14.5" stroke="#fff" stroke-width="1"/></svg>
<div style="position:absolute;left:875px;top:112px;width:148px;height:520px;background:#fff;border-top:2px solid #000;border-left:2px solid #000;border-right:1px solid #e8e8e8;border-bottom:1px solid #e8e8e8"></div>
<div style="position:absolute;left:878px;top:133px;width:43px;height:20px;background:#808080"></div>
<div style="position:absolute;left:878px;top:116px;font-size:13px;line-height:13px;color:#000;white-space:nowrap;letter-spacing:0.65px">Bezug</div>
<div style="position:absolute;left:878px;top:136px;font-size:13px;line-height:13px;color:#fff;white-space:nowrap;letter-spacing:0.65px">Kasten</div>
<div style="position:absolute;left:878px;top:156px;font-size:13px;line-height:13px;color:#000;white-space:nowrap;letter-spacing:0.65px">Maßlinie</div>
<div style="position:absolute;left:878px;top:176px;font-size:13px;line-height:13px;color:#000;white-space:nowrap;letter-spacing:0.65px">Objekt mit Pfeilspitze</div>
<div style="position:absolute;left:878px;top:196px;font-size:13px;line-height:13px;color:#000;white-space:nowrap;letter-spacing:0.65px">Objekt mit Schatten</div>
<div style="position:absolute;left:878px;top:216px;font-size:13px;line-height:13px;color:#000;white-space:nowrap;letter-spacing:0.65px">Objekt ohne Füllung</div>
<div style="position:absolute;left:878px;top:236px;font-size:13px;line-height:13px;color:#000;white-space:nowrap;letter-spacing:0.65px">Pfeil</div>
<div style="position:absolute;left:878px;top:256px;font-size:13px;line-height:13px;color:#000;white-space:nowrap;letter-spacing:0.65px">Standard</div>
<div style="position:absolute;left:878px;top:276px;font-size:13px;line-height:13px;color:#000;white-space:nowrap;letter-spacing:0.65px">Text</div>
<div style="position:absolute;left:878px;top:296px;font-size:13px;line-height:13px;color:#000;white-space:nowrap;letter-spacing:0.65px">Textkörper</div>
<div style="position:absolute;left:878px;top:316px;font-size:13px;line-height:13px;color:#000;white-space:nowrap;letter-spacing:0.65px">Textkörper Blocksatz</div>
<div style="position:absolute;left:878px;top:336px;font-size:13px;line-height:13px;color:#000;white-space:nowrap;letter-spacing:0.65px">Textkörper Einzug</div>
<div style="position:absolute;left:878px;top:356px;font-size:13px;line-height:13px;color:#000;white-space:nowrap;letter-spacing:0.65px">Titel</div>
<div style="position:absolute;left:878px;top:376px;font-size:13px;line-height:13px;color:#000;white-space:nowrap;letter-spacing:0.65px">Titel1</div>
<div style="position:absolute;left:878px;top:396px;font-size:13px;line-height:13px;color:#000;white-space:nowrap;letter-spacing:0.65px">Titel2</div>
<div style="position:absolute;left:878px;top:416px;font-size:13px;line-height:13px;color:#000;white-space:nowrap;letter-spacing:0.65px">Überschrift</div>
<div style="position:absolute;left:878px;top:436px;font-size:13px;line-height:13px;color:#000;white-space:nowrap;letter-spacing:0.65px">Überschrift1</div>
<div style="position:absolute;left:878px;top:456px;font-size:13px;line-height:13px;color:#000;white-space:nowrap;letter-spacing:0.65px">Überschrift2</div>
<div style="position:absolute;left:875px;top:636px;width:148px;height:27px;background:#fff;border-top:2px solid #000;border-left:2px solid #000;border-right:1px solid #e8e8e8;border-bottom:1px solid #e8e8e8"></div>
<div style="position:absolute;left:878px;top:643px;font-size:13px;line-height:13px;color:#000;white-space:nowrap;letter-spacing:0.65px">Alle Vorlagen</div>
<div style="position:absolute;left:1008px;top:638px;width:14px;height:24px;background:#c0c0c0;border-top:1px solid #fff;border-left:1px solid #fff;border-right:1px solid #808080;border-bottom:1px solid #808080;box-sizing:border-box;border-right:1px solid #000;border-bottom:1px solid #000"></div>
<svg style="position:absolute;left:1008px;top:638px;" width="14" height="24" viewBox="0 0 14 24"><path d="M3 9.5 L7 13.5 L11 9.5Z" fill="#000"/></svg>
<div style="position:absolute;left:75px;top:223px;width:169px;height:119px;background:#c0c0c0;border:1px solid #000"></div>
<div style="position:absolute;left:76px;top:224px;width:167px;height:1px;background:#e8ecf4"></div>
<div style="position:absolute;left:76px;top:225px;width:167px;height:17px;background:#8a9bb8"></div>
<div style="position:absolute;left:76px;top:242px;width:167px;height:99px;background:#c0c0c0;border-left:1px solid #9a9a9a"></div>
<svg style="position:absolute;left:81px;top:226px;" width="12" height="15" viewBox="0 0 12 15"><path d="M0.5 0.5 H8.5 L11.5 3.5 V14.5 H0.5Z" fill="#fff" stroke="#888" stroke-width="1"/><path d="M2 13 L10 4" stroke="#00007f" stroke-width="2"/><path d="M2 13 L4 11" stroke="#ff0" stroke-width="1.5"/><path d="M3 8 L6 4 L8 7Z" fill="#9ef"/></svg>
<svg style="position:absolute;left:94px;top:228px;" width="14" height="11" viewBox="0 0 14 11"><path d="M0 5.5 H5" stroke="#fff" stroke-width="2"/><path d="M5 1 L8 4 V7 L5 10Z M13 1 L10 4 V7 L13 10Z" fill="#fff" stroke="#000" stroke-width="1.2"/><rect x="7" y="4" width="4" height="3" fill="#ddd"/></svg>
<div style="position:absolute;left:112px;top:226px;font-size:14.5px;line-height:16px;font-weight:bold;color:#fff;white-space:nowrap;">Verbinder</div>
<div style="position:absolute;left:222px;top:224px;width:21px;height:20px;background:#dcdcd4"></div>
<div style="position:absolute;left:224px;top:226px;width:16px;height:15px;background:#c0c0c0;border-top:1px solid #fff;border-left:1px solid #fff;border-right:1px solid #808080;border-bottom:1px solid #808080;box-sizing:border-box;border-right:1px solid #404040;border-bottom:1px solid #404040"></div>
<svg style="position:absolute;left:224px;top:226px;" width="16" height="15" viewBox="0 0 16 15"><path d="M4 4 L11 11 M11 4 L4 11" stroke="#000" stroke-width="2.4"/></svg>
<div style="position:absolute;left:76px;top:334px;width:167px;height:7px;background:#d4d4cc;border-top:1px solid #909090"></div>
<div style="position:absolute;left:95px;top:334px;width:2px;height:7px;background:#909090;border-left:1px solid #fff"></div>
<div style="position:absolute;left:222px;top:334px;width:2px;height:7px;background:#909090;border-left:1px solid #fff"></div>
<div style="position:absolute;left:78px;top:242px;width:164px;height:91px;border:1px solid #9a9a9a"></div>
<svg style="position:absolute;left:76px;top:224px;" width="168" height="118" viewBox="0 0 168 118"><g transform="translate(5.6 23.7)"><path d="M4 3 H8 V10 H12" fill="none" stroke="#00007f" stroke-width="1.15"/><rect x="1.5" y="1.5" width="3.5" height="3.5" fill="#fff" stroke="#00007f" stroke-width="1.2"/><rect x="11.5" y="8.5" width="3.5" height="3.5" fill="#fff" stroke="#00007f" stroke-width="1.2"/></g><g transform="translate(28.3 23.7)"><path d="M4 3 H8 V10 H12" fill="none" stroke="#00007f" stroke-width="1.15"/><path d="M1 3 L5.5 -0.5 V6.5Z" fill="#00007f"/><rect x="11.5" y="8.5" width="3.5" height="3.5" fill="#fff" stroke="#00007f" stroke-width="1.2"/></g><g transform="translate(51.6 23.7)"><path d="M4 3 H8 V10 H12" fill="none" stroke="#00007f" stroke-width="1.15"/><rect x="1.5" y="1.5" width="3.5" height="3.5" fill="#fff" stroke="#00007f" stroke-width="1.2"/><path d="M15.5 10 L11 6.5 V13.5Z" fill="#00007f"/></g><g transform="translate(74.3 23.7)"><path d="M4 3 H8 V10 H12" fill="none" stroke="#00007f" stroke-width="1.15"/><path d="M1 3 L5.5 -0.5 V6.5Z" fill="#00007f"/><path d="M15.5 10 L11 6.5 V13.5Z" fill="#00007f"/></g><g transform="translate(97.4 23.7)"><path d="M4 3 H8 V10 H12" fill="none" stroke="#00007f" stroke-width="1.15"/><circle cx="3" cy="3" r="2.6" fill="#00007f"/><rect x="11.5" y="8.5" width="3.5" height="3.5" fill="#fff" stroke="#00007f" stroke-width="1.2"/></g><g transform="translate(120.5 23.7)"><path d="M4 3 H8 V10 H12" fill="none" stroke="#00007f" stroke-width="1.15"/><rect x="1.5" y="1.5" width="3.5" height="3.5" fill="#fff" stroke="#00007f" stroke-width="1.2"/><circle cx="13" cy="10" r="2.6" fill="#00007f"/></g><g transform="translate(143.8 23.7)"><path d="M4 3 H8 V10 H12" fill="none" stroke="#00007f" stroke-width="1.15"/><circle cx="3" cy="3" r="2.6" fill="#00007f"/><circle cx="13" cy="10" r="2.6" fill="#00007f"/></g><g transform="translate(5.6 46.4)"><path d="M4 3 H6 L10 10 H12" fill="none" stroke="#00007f" stroke-width="1.15"/><rect x="1.5" y="1.5" width="3.5" height="3.5" fill="#fff" stroke="#00007f" stroke-width="1.2"/><rect x="11.5" y="8.5" width="3.5" height="3.5" fill="#fff" stroke="#00007f" stroke-width="1.2"/></g><g transform="translate(28.3 46.4)"><path d="M4 3 H6 L10 10 H12" fill="none" stroke="#00007f" stroke-width="1.15"/><path d="M1 3 L5.5 -0.5 V6.5Z" fill="#00007f"/><rect x="11.5" y="8.5" width="3.5" height="3.5" fill="#fff" stroke="#00007f" stroke-width="1.2"/></g><g transform="translate(51.6 46.4)"><path d="M4 3 H6 L10 10 H12" fill="none" stroke="#00007f" stroke-width="1.15"/><rect x="1.5" y="1.5" width="3.5" height="3.5" fill="#fff" stroke="#00007f" stroke-width="1.2"/><path d="M15.5 10 L11 6.5 V13.5Z" fill="#00007f"/></g><g transform="translate(74.3 46.4)"><path d="M4 3 H6 L10 10 H12" fill="none" stroke="#00007f" stroke-width="1.15"/><path d="M1 3 L5.5 -0.5 V6.5Z" fill="#00007f"/><path d="M15.5 10 L11 6.5 V13.5Z" fill="#00007f"/></g><g transform="translate(97.4 46.4)"><path d="M4 3 H6 L10 10 H12" fill="none" stroke="#00007f" stroke-width="1.15"/><circle cx="3" cy="3" r="2.6" fill="#00007f"/><rect x="11.5" y="8.5" width="3.5" height="3.5" fill="#fff" stroke="#00007f" stroke-width="1.2"/></g><g transform="translate(120.5 46.4)"><path d="M4 3 H6 L10 10 H12" fill="none" stroke="#00007f" stroke-width="1.15"/><rect x="1.5" y="1.5" width="3.5" height="3.5" fill="#fff" stroke="#00007f" stroke-width="1.2"/><circle cx="13" cy="10" r="2.6" fill="#00007f"/></g><g transform="translate(143.8 46.4)"><path d="M4 3 H6 L10 10 H12" fill="none" stroke="#00007f" stroke-width="1.15"/><circle cx="3" cy="3" r="2.6" fill="#00007f"/><circle cx="13" cy="10" r="2.6" fill="#00007f"/></g><g transform="translate(5.6 69.1)"><path d="M4 3 L12 10" fill="none" stroke="#00007f" stroke-width="1.15"/><rect x="1.5" y="1.5" width="3.5" height="3.5" fill="#fff" stroke="#00007f" stroke-width="1.2"/><rect x="11.5" y="8.5" width="3.5" height="3.5" fill="#fff" stroke="#00007f" stroke-width="1.2"/></g><g transform="translate(28.3 69.1)"><path d="M4 3 L12 10" fill="none" stroke="#00007f" stroke-width="1.15"/><path d="M1.5 1 L7 2 L2.5 6.5Z" fill="#00007f"/><rect x="11.5" y="8.5" width="3.5" height="3.5" fill="#fff" stroke="#00007f" stroke-width="1.2"/></g><g transform="translate(51.6 69.1)"><path d="M4 3 L12 10" fill="none" stroke="#00007f" stroke-width="1.15"/><rect x="1.5" y="1.5" width="3.5" height="3.5" fill="#fff" stroke="#00007f" stroke-width="1.2"/><path d="M15 12 L9.5 11 L14 6.5Z" fill="#00007f"/></g><g transform="translate(74.3 69.1)"><path d="M4 3 L12 10" fill="none" stroke="#00007f" stroke-width="1.15"/><path d="M1.5 1 L7 2 L2.5 6.5Z" fill="#00007f"/><path d="M15 12 L9.5 11 L14 6.5Z" fill="#00007f"/></g><g transform="translate(97.4 69.1)"><path d="M4 3 L12 10" fill="none" stroke="#00007f" stroke-width="1.15"/><circle cx="3" cy="3" r="2.6" fill="#00007f"/><rect x="11.5" y="8.5" width="3.5" height="3.5" fill="#fff" stroke="#00007f" stroke-width="1.2"/></g><g transform="translate(120.5 69.1)"><path d="M4 3 L12 10" fill="none" stroke="#00007f" stroke-width="1.15"/><rect x="1.5" y="1.5" width="3.5" height="3.5" fill="#fff" stroke="#00007f" stroke-width="1.2"/><circle cx="13" cy="10" r="2.6" fill="#00007f"/></g><g transform="translate(143.8 69.1)"><path d="M4 3 L12 10" fill="none" stroke="#00007f" stroke-width="1.15"/><circle cx="3" cy="3" r="2.6" fill="#00007f"/><circle cx="13" cy="10" r="2.6" fill="#00007f"/></g><g transform="translate(5.6 92.8)"><path d="M4 3 H7 C10 3 10 6 7 8 L6 10 H12" fill="none" stroke="#00007f" stroke-width="1.15"/><rect x="1.5" y="1.5" width="3.5" height="3.5" fill="#fff" stroke="#00007f" stroke-width="1.2"/><rect x="11.5" y="8.5" width="3.5" height="3.5" fill="#fff" stroke="#00007f" stroke-width="1.2"/></g><g transform="translate(28.3 92.8)"><path d="M4 3 H7 C10 3 10 6 7 8 L6 10 H12" fill="none" stroke="#00007f" stroke-width="1.15"/><path d="M1 3 L5.5 -0.5 V6.5Z" fill="#00007f"/><rect x="11.5" y="8.5" width="3.5" height="3.5" fill="#fff" stroke="#00007f" stroke-width="1.2"/></g><g transform="translate(51.6 92.8)"><path d="M4 3 H7 C10 3 10 6 7 8 L6 10 H12" fill="none" stroke="#00007f" stroke-width="1.15"/><rect x="1.5" y="1.5" width="3.5" height="3.5" fill="#fff" stroke="#00007f" stroke-width="1.2"/><path d="M15.5 10 L11 6.5 V13.5Z" fill="#00007f"/></g><g transform="translate(74.3 92.8)"><path d="M4 3 H7 C10 3 10 6 7 8 L6 10 H12" fill="none" stroke="#00007f" stroke-width="1.15"/><path d="M1 3 L5.5 -0.5 V6.5Z" fill="#00007f"/><path d="M15.5 10 L11 6.5 V13.5Z" fill="#00007f"/></g><g transform="translate(97.4 92.8)"><path d="M4 3 H7 C10 3 10 6 7 8 L6 10 H12" fill="none" stroke="#00007f" stroke-width="1.15"/><circle cx="3" cy="3" r="2.6" fill="#00007f"/><rect x="11.5" y="8.5" width="3.5" height="3.5" fill="#fff" stroke="#00007f" stroke-width="1.2"/></g><g transform="translate(120.5 92.8)"><path d="M4 3 H7 C10 3 10 6 7 8 L6 10 H12" fill="none" stroke="#00007f" stroke-width="1.15"/><rect x="1.5" y="1.5" width="3.5" height="3.5" fill="#fff" stroke="#00007f" stroke-width="1.2"/><circle cx="13" cy="10" r="2.6" fill="#00007f"/></g><g transform="translate(143.8 92.8)"><path d="M4 3 H7 C10 3 10 6 7 8 L6 10 H12" fill="none" stroke="#00007f" stroke-width="1.15"/><circle cx="3" cy="3" r="2.6" fill="#00007f"/><circle cx="13" cy="10" r="2.6" fill="#00007f"/></g></svg>
<div style="position:absolute;left:754px;top:161px;width:76px;height:56px;background:#c0c0c0;border:1px solid #000"></div>
<div style="position:absolute;left:755px;top:162px;width:74px;height:1px;background:#e8ecf4"></div>
<div style="position:absolute;left:755px;top:163px;width:74px;height:17px;background:#8a9bb8"></div>
<div style="position:absolute;left:755px;top:180px;width:74px;height:36px;background:#c0c0c0;border-left:1px solid #9a9a9a"></div>
<div style="position:absolute;left:760px;top:164px;font-size:14.5px;line-height:16px;font-weight:bold;color:#fff;white-space:nowrap;">Text</div>
<div style="position:absolute;left:755px;top:209px;width:74px;height:7px;background:#d4d4cc;border-top:1px solid #909090"></div>
<div style="position:absolute;left:773px;top:209px;width:2px;height:7px;background:#909090;border-left:1px solid #fff"></div>
<div style="position:absolute;left:809px;top:209px;width:2px;height:7px;background:#909090;border-left:1px solid #fff"></div>
<div style="position:absolute;left:757px;top:180px;width:71px;height:28px;border:1px solid #9a9a9a"></div>
<div style="position:absolute;left:825px;top:162px;width:4px;height:18px;background:#e4e4dc"></div>
<svg style="position:absolute;left:754px;top:161px;" width="76" height="56" viewBox="0 0 76 56"><path d="M8.5 24 H20.5 V28 H19 V26.5 H16 V36 H18 V38 H11 V36 H13 V26.5 H10 V28 H8.5Z" fill="#00007f"/><rect x="29.5" y="25.5" width="15" height="10" fill="none" stroke="#00007f" stroke-width="1.6"/><path d="M33 28 H41 V30 H38.5 V33 H39.5 V34 H34.5 V33 H35.5 V30 H33Z" fill="#00007f"/><ellipse cx="60" cy="29.5" rx="7.5" ry="5.5" fill="#fff" stroke="#00007f" stroke-width="1.6"/><path d="M54 33 L52.5 37.5 L57 34.5" fill="#fff" stroke="#00007f" stroke-width="1.4"/><path d="M55 27.5 H65 M55 29.8 H65 M55 32 H63" stroke="#00007f" stroke-width="1.3"/></svg>
<div style="position:absolute;left:755px;top:218px;width:121px;height:72px;background:#c0c0c0;border:1px solid #000"></div>
<div style="position:absolute;left:756px;top:219px;width:119px;height:1px;background:#e8ecf4"></div>
<div style="position:absolute;left:756px;top:220px;width:119px;height:17px;background:#8a9bb8"></div>
<div style="position:absolute;left:756px;top:237px;width:119px;height:52px;background:#c0c0c0;border-left:1px solid #9a9a9a"></div>
<svg style="position:absolute;left:761px;top:221px;" width="12" height="15" viewBox="0 0 12 15"><path d="M0.5 0.5 H8.5 L11.5 3.5 V14.5 H0.5Z" fill="#fff" stroke="#888" stroke-width="1"/><path d="M2 13 L10 4" stroke="#00007f" stroke-width="2"/><path d="M2 13 L4 11" stroke="#ff0" stroke-width="1.5"/><path d="M3 8 L6 4 L8 7Z" fill="#9ef"/></svg>
<div style="position:absolute;left:775px;top:221px;font-size:14.5px;line-height:16px;font-weight:bold;color:#fff;white-space:nowrap;">Zoomen</div>
<div style="position:absolute;left:854px;top:219px;width:21px;height:20px;background:#dcdcd4"></div>
<div style="position:absolute;left:856px;top:221px;width:16px;height:15px;background:#c0c0c0;border-top:1px solid #fff;border-left:1px solid #fff;border-right:1px solid #808080;border-bottom:1px solid #808080;box-sizing:border-box;border-right:1px solid #404040;border-bottom:1px solid #404040"></div>
<svg style="position:absolute;left:856px;top:221px;" width="16" height="15" viewBox="0 0 16 15"><path d="M4 4 L11 11 M11 4 L4 11" stroke="#000" stroke-width="2.4"/></svg>
<div style="position:absolute;left:756px;top:282px;width:119px;height:7px;background:#d4d4cc;border-top:1px solid #909090"></div>
<div style="position:absolute;left:774px;top:282px;width:2px;height:7px;background:#909090;border-left:1px solid #fff"></div>
<div style="position:absolute;left:850px;top:282px;width:2px;height:7px;background:#909090;border-left:1px solid #fff"></div>
<div style="position:absolute;left:758px;top:237px;width:116px;height:44px;border:1px solid #9a9a9a"></div>
<svg style="position:absolute;left:755px;top:218px;font-family:Liberation Sans" width="121" height="72" viewBox="0 0 121 72"><circle cx="11.200000000000045" cy="28.599999999999994" r="5" fill="#fff" stroke="#000" stroke-width="1.3"/><path d="M14.700000000000045 32.099999999999994 L19.200000000000045 36.599999999999994" stroke="#000" stroke-width="2.2"/><path d="M8.700000000000045 28.599999999999994 H13.700000000000045 M11.200000000000045 26.099999999999994 V31.099999999999994" stroke="#00007f" stroke-width="1.6"/><circle cx="34.60000000000002" cy="28.599999999999994" r="5" fill="#fff" stroke="#000" stroke-width="1.3"/><path d="M38.10000000000002 32.099999999999994 L42.60000000000002 36.599999999999994" stroke="#000" stroke-width="2.2"/><path d="M32.10000000000002 28.599999999999994 H37.10000000000002" stroke="#00007f" stroke-width="1.6"/><circle cx="58.10000000000002" cy="28.599999999999994" r="5" fill="#fff" stroke="#000" stroke-width="1.3"/><path d="M61.60000000000002 32.099999999999994 L66.10000000000002 36.599999999999994" stroke="#000" stroke-width="2.2"/><text x="58.10000000000002" y="31.099999999999994" font-size="6" text-anchor="middle" fill="#00007f" font-weight="bold">1:1</text><circle cx="81.60000000000002" cy="28.599999999999994" r="5" fill="#fff" stroke="#000" stroke-width="1.3"/><path d="M85.10000000000002 32.099999999999994 L89.60000000000002 36.599999999999994" stroke="#000" stroke-width="2.2"/><path d="M77.60000000000002 35.599999999999994 C83.60000000000002 37.599999999999994 89.60000000000002 35.599999999999994 89.60000000000002 33.599999999999994" fill="none" stroke="#00007f" stroke-width="1.3"/><g opacity="0.45"><circle cx="103.5" cy="28.599999999999994" r="5" fill="#fff" stroke="#000" stroke-width="1.3"/><path d="M107.0 32.099999999999994 L111.5 36.599999999999994" stroke="#000" stroke-width="2.2"/></g><rect x="6.2000000000000455" y="49.5" width="9" height="10" fill="#fff" stroke="#000" stroke-width="1"/><circle cx="14.200000000000045" cy="50.5" r="4.5" fill="#f0f0f0" stroke="#000" stroke-width="1.1"/><path d="M17.200000000000045 53.5 L20.200000000000045 56.5" stroke="#000" stroke-width="1.8"/><rect x="29.600000000000023" y="49.5" width="9" height="10" fill="#fff" stroke="#000" stroke-width="1"/><circle cx="37.60000000000002" cy="50.5" r="4.5" fill="#f0f0f0" stroke="#000" stroke-width="1.1"/><path d="M40.60000000000002 53.5 L43.60000000000002 56.5" stroke="#000" stroke-width="1.8"/><path d="M29.600000000000023 57.5 H39.60000000000002" stroke="#00007f" stroke-width="1.3"/><rect x="53.10000000000002" y="49.5" width="9" height="10" fill="#ffe080" stroke="#000" stroke-width="1"/><circle cx="61.10000000000002" cy="50.5" r="4.5" fill="#f0f0f0" stroke="#000" stroke-width="1.1"/><path d="M64.10000000000002 53.5 L67.10000000000002 56.5" stroke="#000" stroke-width="1.8"/><rect x="76.60000000000002" y="49.5" width="9" height="10" fill="#fff" stroke="#000" stroke-width="1"/><circle cx="84.60000000000002" cy="50.5" r="4.5" fill="#f0f0f0" stroke="#000" stroke-width="1.1"/><path d="M87.60000000000002 53.5 L90.60000000000002 56.5" stroke="#000" stroke-width="1.8"/><rect x="78.60000000000002" y="53.5" width="6" height="4" fill="none" stroke="#00007f" stroke-width="1.2"/><rect x="98.5" y="49.5" width="9" height="10" fill="#ffe860" stroke="#000" stroke-width="1"/><circle cx="106.5" cy="50.5" r="4.5" fill="#f0f0f0" stroke="#000" stroke-width="1.1"/><path d="M109.5 53.5 L112.5 56.5" stroke="#000" stroke-width="1.8"/></svg>
<div style="position:absolute;left:775px;top:292px;width:100px;height:73px;background:#c0c0c0;border:1px solid #000"></div>
<div style="position:absolute;left:776px;top:293px;width:98px;height:1px;background:#e8ecf4"></div>
<div style="position:absolute;left:776px;top:294px;width:98px;height:17px;background:#8a9bb8"></div>
<div style="position:absolute;left:776px;top:311px;width:98px;height:53px;background:#c0c0c0;border-left:1px solid #9a9a9a"></div>
<svg style="position:absolute;left:781px;top:295px;" width="12" height="15" viewBox="0 0 12 15"><path d="M0.5 0.5 H8.5 L11.5 3.5 V14.5 H0.5Z" fill="#fff" stroke="#888" stroke-width="1"/><path d="M2 13 L10 4" stroke="#00007f" stroke-width="2"/><path d="M2 13 L4 11" stroke="#ff0" stroke-width="1.5"/><path d="M3 8 L6 4 L8 7Z" fill="#9ef"/></svg>
<div style="position:absolute;left:795px;top:295px;font-size:14.5px;line-height:16px;font-weight:bold;color:#fff;white-space:nowrap;width:54px;overflow:hidden;">Rechteck</div>
<div style="position:absolute;left:853px;top:293px;width:21px;height:20px;background:#dcdcd4"></div>
<div style="position:absolute;left:855px;top:295px;width:16px;height:15px;background:#c0c0c0;border-top:1px solid #fff;border-left:1px solid #fff;border-right:1px solid #808080;border-bottom:1px solid #808080;box-sizing:border-box;border-right:1px solid #404040;border-bottom:1px solid #404040"></div>
<svg style="position:absolute;left:855px;top:295px;" width="16" height="15" viewBox="0 0 16 15"><path d="M4 4 L11 11 M11 4 L4 11" stroke="#000" stroke-width="2.4"/></svg>
<div style="position:absolute;left:776px;top:357px;width:98px;height:7px;background:#d4d4cc;border-top:1px solid #909090"></div>
<div style="position:absolute;left:794px;top:357px;width:2px;height:7px;background:#909090;border-left:1px solid #fff"></div>
<div style="position:absolute;left:850px;top:357px;width:2px;height:7px;background:#909090;border-left:1px solid #fff"></div>
<div style="position:absolute;left:778px;top:311px;width:95px;height:45px;border:1px solid #9a9a9a"></div>
<svg style="position:absolute;left:775px;top:292px;" width="100" height="73" viewBox="0 0 100 73"><rect x="6.5" y="25.5" width="15" height="9.5" rx="0" fill="#4a8c88" stroke="#00007f" stroke-width="1.3"/><rect x="31.5" y="25.5" width="11" height="9.5" rx="0" fill="#4a8c88" stroke="#00007f" stroke-width="1.3"/><rect x="52.5" y="25.5" width="15" height="9.5" rx="4" fill="#4a8c88" stroke="#00007f" stroke-width="1.3"/><rect x="77.5" y="25.5" width="11" height="9.5" rx="4" fill="#4a8c88" stroke="#00007f" stroke-width="1.3"/><rect x="6.5" y="48.0" width="15" height="10.5" rx="0" fill="none" stroke="#00007f" stroke-width="1.3"/><rect x="31.5" y="48.0" width="11" height="10.5" rx="0" fill="none" stroke="#00007f" stroke-width="1.3"/><rect x="52.5" y="48.0" width="15" height="10.5" rx="4" fill="none" stroke="#00007f" stroke-width="1.3"/><rect x="77.5" y="48.0" width="11" height="10.5" rx="4" fill="none" stroke="#00007f" stroke-width="1.3"/></svg>
<div style="position:absolute;left:4px;top:639px;width:857px;height:1px;background:#fff"></div>
<div style="position:absolute;left:4px;top:667px;width:1025px;height:1px;background:#808080"></div>
<div style="position:absolute;left:4px;top:668px;width:1025px;height:1px;background:#fff"></div>
<div style="position:absolute;left:871px;top:639px;width:155px;height:28px;background:#c0c0c0"></div>
<div style="position:absolute;left:875px;top:636px;width:148px;height:27px;background:#fff;border-top:2px solid #000;border-left:2px solid #000;border-right:1px solid #e8e8e8;border-bottom:1px solid #e8e8e8"></div>
<div style="position:absolute;left:878px;top:643px;font-size:13px;line-height:13px;color:#000;white-space:nowrap;letter-spacing:0.65px">Alle Vorlagen</div>
<div style="position:absolute;left:1008px;top:638px;width:14px;height:24px;background:#c0c0c0;border-top:1px solid #fff;border-left:1px solid #fff;border-right:1px solid #808080;border-bottom:1px solid #808080;box-sizing:border-box;border-right:1px solid #000;border-bottom:1px solid #000"></div>
<svg style="position:absolute;left:1008px;top:638px;" width="14" height="24" viewBox="0 0 14 24"><path d="M3 9.5 L7 13.5 L11 9.5Z" fill="#000"/></svg>
<div style="position:absolute;left:861px;top:639px;width:10px;height:28px;background:#c0c0c0"></div>
<svg style="position:absolute;left:9px;top:644px;" width="20" height="18" viewBox="0 0 20 18"><path d="M3.5 8.5 L7.5 4.5 H16.5 L11.5 9.5 L16.5 14.5 H3.5Z" fill="none" stroke="#000" stroke-width="1"/><rect x="1.5" y="6.5" width="3" height="3" fill="#fff" stroke="#00007f" stroke-width="1.1"/><rect x="5.5" y="2.5" width="3" height="3" fill="#fff" stroke="#00007f" stroke-width="1.1"/><rect x="14.5" y="2.5" width="3" height="3" fill="#fff" stroke="#00007f" stroke-width="1.1"/><rect x="9.5" y="7.5" width="3" height="3" fill="#fff" stroke="#00007f" stroke-width="1.1"/><rect x="14.5" y="12.5" width="3" height="3" fill="#fff" stroke="#00007f" stroke-width="1.1"/><rect x="1.5" y="12.5" width="3" height="3" fill="#fff" stroke="#00007f" stroke-width="1.1"/></svg>
<svg style="position:absolute;left:34px;top:644px;" width="18" height="18" viewBox="0 0 18 18"><path d="M3 15 L13 4 L16 7 L6 17Z" fill="#ff0" stroke="#000" stroke-width="1.2"/><path d="M3 15 L1.5 17.5" stroke="#0cc" stroke-width="2"/><path d="M11 3 L14 1 L17 4 L15 6" fill="#000"/></svg>
<div style="position:absolute;left:56px;top:643px;width:1px;height:21px;background:#808080"></div>
<div style="position:absolute;left:57px;top:643px;width:1px;height:21px;background:#fff"></div>
<svg style="position:absolute;left:63px;top:644px;" width="20" height="18" viewBox="0 0 20 18"><rect x="8" y="7" width="10" height="10" fill="#808080"/><path d="M8 7 H18" stroke="#000" stroke-width="2"/><path d="M10 17 V11 M13 17 V10 M15 17 V12" stroke="#000" stroke-width="1.2"/><path d="M11 17 H17" stroke="#ff0" stroke-width="2"/><path d="M2 6 A4 4 0 0 1 8 3" fill="none" stroke="#00007f" stroke-width="1.4"/><rect x="4.5" y="5.5" width="3" height="3" fill="#fff" stroke="#00007f"/></svg>
<div style="position:absolute;left:87px;top:643px;width:1px;height:21px;background:#808080"></div>
<div style="position:absolute;left:88px;top:643px;width:1px;height:21px;background:#fff"></div>
<svg style="position:absolute;left:95px;top:644px;" width="18" height="18" viewBox="0 0 18 18"><rect x="2" y="2" width="1" height="1" fill="#000"/><rect x="2" y="5" width="1" height="1" fill="#000"/><rect x="2" y="8" width="1" height="1" fill="#000"/><rect x="2" y="11" width="1" height="1" fill="#000"/><rect x="2" y="14" width="1" height="1" fill="#000"/><rect x="5" y="2" width="1" height="1" fill="#000"/><rect x="5" y="5" width="1" height="1" fill="#000"/><rect x="5" y="8" width="1" height="1" fill="#000"/><rect x="5" y="11" width="1" height="1" fill="#000"/><rect x="5" y="14" width="1" height="1" fill="#000"/><rect x="8" y="2" width="1" height="1" fill="#000"/><rect x="8" y="5" width="1" height="1" fill="#000"/><rect x="8" y="8" width="1" height="1" fill="#000"/><rect x="8" y="11" width="1" height="1" fill="#000"/><rect x="8" y="14" width="1" height="1" fill="#000"/><rect x="11" y="2" width="1" height="1" fill="#000"/><rect x="11" y="5" width="1" height="1" fill="#000"/><rect x="11" y="8" width="1" height="1" fill="#000"/><rect x="11" y="11" width="1" height="1" fill="#000"/><rect x="11" y="14" width="1" height="1" fill="#000"/><rect x="14" y="2" width="1" height="1" fill="#000"/><rect x="14" y="5" width="1" height="1" fill="#000"/><rect x="14" y="8" width="1" height="1" fill="#000"/><rect x="14" y="11" width="1" height="1" fill="#000"/><rect x="14" y="14" width="1" height="1" fill="#000"/></svg>
<svg style="position:absolute;left:118px;top:644px;" width="18" height="18" viewBox="0 0 18 18"><path d="M8.5 1 V17 M1 10.5 H17" stroke="#00007f" stroke-width="1.2" stroke-dasharray="2 1"/></svg>
<svg style="position:absolute;left:141px;top:644px;" width="18" height="18" viewBox="0 0 18 18"><rect x="5" y="6" width="9" height="7" fill="#808080"/><path d="M4.5 1 V17 M14.5 1 V17 M1 5.5 H17 M1 13.5 H17" stroke="#00007f" stroke-width="1.1" stroke-dasharray="2 1"/></svg>
<div style="position:absolute;left:165px;top:643px;width:1px;height:21px;background:#808080"></div>
<div style="position:absolute;left:166px;top:643px;width:1px;height:21px;background:#fff"></div>
<svg style="position:absolute;left:172px;top:644px;" width="20" height="18" viewBox="0 0 20 18"><rect x="2" y="4" width="1" height="1" fill="#000"/><rect x="2" y="7" width="1" height="1" fill="#000"/><rect x="2" y="10" width="1" height="1" fill="#000"/><rect x="2" y="13" width="1" height="1" fill="#000"/><rect x="2" y="16" width="1" height="1" fill="#000"/><rect x="5" y="4" width="1" height="1" fill="#000"/><rect x="5" y="7" width="1" height="1" fill="#000"/><rect x="5" y="10" width="1" height="1" fill="#000"/><rect x="5" y="13" width="1" height="1" fill="#000"/><rect x="5" y="16" width="1" height="1" fill="#000"/><rect x="8" y="4" width="1" height="1" fill="#000"/><rect x="8" y="7" width="1" height="1" fill="#000"/><rect x="8" y="10" width="1" height="1" fill="#000"/><rect x="8" y="13" width="1" height="1" fill="#000"/><rect x="8" y="16" width="1" height="1" fill="#000"/><rect x="11" y="4" width="1" height="1" fill="#000"/><rect x="11" y="7" width="1" height="1" fill="#000"/><rect x="11" y="10" width="1" height="1" fill="#000"/><rect x="11" y="13" width="1" height="1" fill="#000"/><rect x="11" y="16" width="1" height="1" fill="#000"/><rect x="14" y="4" width="1" height="1" fill="#000"/><rect x="14" y="7" width="1" height="1" fill="#000"/><rect x="14" y="10" width="1" height="1" fill="#000"/><rect x="14" y="13" width="1" height="1" fill="#000"/><rect x="14" y="16" width="1" height="1" fill="#000"/><path d="M13 6 A3 3 0 0 1 20 6 V8 H17 V6.5 A1 1 0 0 0 15 6.5 V8 H13Z" fill="#c00"/></svg>
<div style="position:absolute;left:193px;top:642px;width:92px;height:23px;background:#a8a8c8;border:1px solid #00007f"></div>
<div style="position:absolute;left:216px;top:642px;width:1px;height:23px;background:#00007f"></div>
<div style="position:absolute;left:239px;top:642px;width:1px;height:23px;background:#00007f"></div>
<div style="position:absolute;left:262px;top:642px;width:1px;height:23px;background:#00007f"></div>
<svg style="position:absolute;left:193px;top:642px;" width="92" height="23" viewBox="0 0 92 23"><path d="M10 4 V20 M3 13 H16" stroke="#00007f" stroke-width="1.2" stroke-dasharray="2 1"/><path d="M14 4 A3 3 0 0 1 20 6 V6 H18 V4.5 A1 1 0 0 0 16 6.5 V6 H14Z" fill="#c00"/><path d="M27.5 4.5 H33 L35.5 7 V18.5 H27.5Z" fill="#fff" stroke="#000" stroke-dasharray="1 1"/><g transform="translate(23 -2)"><path d="M14 6 A3 3 0 0 1 20 6 V8 H18 V6.5 A1 1 0 0 0 16 6.5 V8 H14Z" fill="#c00"/></g><rect x="50.5" y="9.5" width="9" height="7" fill="#808080" stroke="#000"/><g transform="translate(46 -2)"><path d="M14 6 A3 3 0 0 1 20 6 V8 H18 V6.5 A1 1 0 0 0 16 6.5 V8 H14Z" fill="#c00"/></g><rect x="73.5" y="8.5" width="10" height="8" fill="none" stroke="#000"/><rect x="72" y="7" width="3" height="3" fill="#fff" stroke="#00007f"/><rect x="82" y="7" width="3" height="3" fill="#fff" stroke="#00007f"/><rect x="72" y="15" width="3" height="3" fill="#fff" stroke="#00007f"/><rect x="82" y="15" width="3" height="3" fill="#fff" stroke="#00007f"/><g transform="translate(69 -2)"><path d="M14 6 A3 3 0 0 1 20 6 V8 H18 V6.5 A1 1 0 0 0 16 6.5 V8 H14Z" fill="#c00"/></g></svg>
<div style="position:absolute;left:288px;top:643px;width:1px;height:21px;background:#808080"></div>
<div style="position:absolute;left:289px;top:643px;width:1px;height:21px;background:#fff"></div>
<svg style="position:absolute;left:295px;top:644px;font-family:Liberation Sans" width="18" height="18" viewBox="0 0 18 18"><rect x="1.5" y="1.5" width="15" height="14" fill="#fff" stroke="#000" stroke-dasharray="1 1"/><text x="9" y="9" font-size="6.5" font-weight="bold" text-anchor="middle" fill="#00007f">ABC</text><path d="M4 13 H8" stroke="#00007f" stroke-width="1.2"/></svg>
<div style="position:absolute;left:316px;top:642px;width:46px;height:23px;background:#a8a8c8;border:1px solid #00007f"></div>
<div style="position:absolute;left:339px;top:642px;width:1px;height:23px;background:#00007f"></div>
<svg style="position:absolute;left:319px;top:644px;font-family:Liberation Sans" width="18" height="18" viewBox="0 0 18 18"><rect x="1.5" y="1.5" width="15" height="14" fill="#fff" stroke="#000" stroke-dasharray="1 1"/><text x="9" y="9" font-size="6.5" font-weight="bold" text-anchor="middle" fill="#00007f">ABC</text><path d="M4 13 H8" stroke="#00007f" stroke-width="1.2"/><path d="M10 9 L10 16 L12 14 L14 17 L15 16 L13 13 L15.5 13Z" fill="#fff" stroke="#000" stroke-width="0.8"/></svg>
<svg style="position:absolute;left:342px;top:644px;font-family:Liberation Sans" width="18" height="18" viewBox="0 0 18 18"><rect x="1.5" y="1.5" width="15" height="14" fill="#fff" stroke="#000" stroke-dasharray="1 1"/><text x="9" y="9" font-size="6.5" font-weight="bold" text-anchor="middle" fill="#00007f">ABC</text><path d="M4 13 H8" stroke="#00007f" stroke-width="1.2"/><path d="M11 11 V17 H16 V12 L14 12 V10 H12Z" fill="#ffe040" stroke="#000" stroke-width="0.8"/></svg>
<div style="position:absolute;left:365px;top:643px;width:1px;height:21px;background:#808080"></div>
<div style="position:absolute;left:366px;top:643px;width:1px;height:21px;background:#fff"></div>
<svg style="position:absolute;left:373px;top:644px;" width="18" height="18" viewBox="0 0 18 18"><rect x="3" y="5" width="12" height="8" fill="#808080" stroke="#000" stroke-width="1.2"/><rect x="1.5" y="3.5" width="3" height="3" fill="#000"/><rect x="13.5" y="3.5" width="3" height="3" fill="#000"/><rect x="1.5" y="11.5" width="3" height="3" fill="#000"/><rect x="13.5" y="11.5" width="3" height="3" fill="#000"/></svg>
<svg style="position:absolute;left:397px;top:644px;" width="18" height="18" viewBox="0 0 18 18"><rect x="4" y="5" width="10" height="9" fill="#808080" stroke="#000" stroke-width="1.2"/><rect x="2" y="3" width="4" height="4" fill="#000"/><rect x="12" y="3" width="4" height="4" fill="#000"/><rect x="2" y="12" width="4" height="4" fill="#000"/><rect x="12" y="12" width="4" height="4" fill="#000"/></svg>
<svg style="position:absolute;left:418px;top:644px;" width="18" height="18" viewBox="0 0 18 18"><path d="M3 2 V17 H8" stroke="#00007f" stroke-width="1.5" fill="none"/><path d="M6 15 L15 4 L17 6 L9 16Z" fill="#c0c0c0" stroke="#000"/><path d="M9 10 L12 13" stroke="#000"/></svg>
<div style="position:absolute;left:442px;top:643px;width:1px;height:21px;background:#808080"></div>
<div style="position:absolute;left:443px;top:643px;width:1px;height:21px;background:#fff"></div>
<svg style="position:absolute;left:450px;top:644px;font-family:Liberation Sans" width="18" height="18" viewBox="0 0 18 18"><rect x="2" y="2" width="14" height="14" fill="#c0c0c0" stroke="#000" stroke-dasharray="1 1"/><path d="M5 12 L9 8 L13 12" stroke="#404040" fill="none" stroke-width="2"/><path d="M2 2 L16 16 M16 2 L2 16" stroke="#c00" stroke-width="1.1"/></svg>
<svg style="position:absolute;left:473px;top:644px;font-family:Liberation Sans" width="18" height="18" viewBox="0 0 18 18"><rect x="2" y="2" width="14" height="14" fill="#404040" stroke="#000" stroke-dasharray="1 1"/><rect x="3.0" y="3.0" width="1" height="1" fill="#fff"/><rect x="3.0" y="5.6" width="1" height="1" fill="#fff"/><rect x="3.0" y="8.2" width="1" height="1" fill="#fff"/><rect x="3.0" y="10.8" width="1" height="1" fill="#fff"/><rect x="3.0" y="13.4" width="1" height="1" fill="#fff"/><rect x="5.6" y="3.0" width="1" height="1" fill="#fff"/><rect x="5.6" y="5.6" width="1" height="1" fill="#fff"/><rect x="5.6" y="8.2" width="1" height="1" fill="#fff"/><rect x="5.6" y="10.8" width="1" height="1" fill="#fff"/><rect x="5.6" y="13.4" width="1" height="1" fill="#fff"/><rect x="8.2" y="3.0" width="1" height="1" fill="#fff"/><rect x="8.2" y="5.6" width="1" height="1" fill="#fff"/><rect x="8.2" y="8.2" width="1" height="1" fill="#fff"/><rect x="8.2" y="10.8" width="1" height="1" fill="#fff"/><rect x="8.2" y="13.4" width="1" height="1" fill="#fff"/><rect x="10.8" y="3.0" width="1" height="1" fill="#fff"/><rect x="10.8" y="5.6" width="1" height="1" fill="#fff"/><rect x="10.8" y="8.2" width="1" height="1" fill="#fff"/><rect x="10.8" y="10.8" width="1" height="1" fill="#fff"/><rect x="10.8" y="13.4" width="1" height="1" fill="#fff"/><rect x="13.4" y="3.0" width="1" height="1" fill="#fff"/><rect x="13.4" y="5.6" width="1" height="1" fill="#fff"/><rect x="13.4" y="8.2" width="1" height="1" fill="#fff"/><rect x="13.4" y="10.8" width="1" height="1" fill="#fff"/><rect x="13.4" y="13.4" width="1" height="1" fill="#fff"/><path d="M2 2 L16 16 M16 2 L2 16" stroke="#c00" stroke-width="1.1"/></svg>
<svg style="position:absolute;left:495px;top:644px;font-family:Liberation Sans" width="18" height="18" viewBox="0 0 18 18"><rect x="2" y="2" width="14" height="14" fill="#fff" stroke="#000" stroke-dasharray="1 1"/><text x="9" y="8" font-size="5.5" text-anchor="middle" fill="#000">ABC</text><text x="9" y="14" font-size="5.5" text-anchor="middle" fill="#000">XYZ</text><path d="M2 2 L16 16 M16 2 L2 16" stroke="#c00" stroke-width="1.1"/></svg>
<svg style="position:absolute;left:518px;top:644px;font-family:Liberation Sans" width="18" height="18" viewBox="0 0 18 18"><rect x="2" y="2" width="14" height="14" fill="#00007f" stroke="#00007f"/><rect x="3.0" y="3.0" width="1" height="1" fill="#c0c0c0"/><rect x="3.0" y="5.6" width="1" height="1" fill="#c0c0c0"/><rect x="3.0" y="8.2" width="1" height="1" fill="#c0c0c0"/><rect x="3.0" y="10.8" width="1" height="1" fill="#c0c0c0"/><rect x="3.0" y="13.4" width="1" height="1" fill="#c0c0c0"/><rect x="5.6" y="3.0" width="1" height="1" fill="#c0c0c0"/><rect x="5.6" y="5.6" width="1" height="1" fill="#c0c0c0"/><rect x="5.6" y="8.2" width="1" height="1" fill="#c0c0c0"/><rect x="5.6" y="10.8" width="1" height="1" fill="#c0c0c0"/><rect x="5.6" y="13.4" width="1" height="1" fill="#c0c0c0"/><rect x="8.2" y="3.0" width="1" height="1" fill="#c0c0c0"/><rect x="8.2" y="5.6" width="1" height="1" fill="#c0c0c0"/><rect x="8.2" y="8.2" width="1" height="1" fill="#c0c0c0"/><rect x="8.2" y="10.8" width="1" height="1" fill="#c0c0c0"/><rect x="8.2" y="13.4" width="1" height="1" fill="#c0c0c0"/><rect x="10.8" y="3.0" width="1" height="1" fill="#c0c0c0"/><rect x="10.8" y="5.6" width="1" height="1" fill="#c0c0c0"/><rect x="10.8" y="8.2" width="1" height="1" fill="#c0c0c0"/><rect x="10.8" y="10.8" width="1" height="1" fill="#c0c0c0"/><rect x="10.8" y="13.4" width="1" height="1" fill="#c0c0c0"/><rect x="13.4" y="3.0" width="1" height="1" fill="#c0c0c0"/><rect x="13.4" y="5.6" width="1" height="1" fill="#c0c0c0"/><rect x="13.4" y="8.2" width="1" height="1" fill="#c0c0c0"/><rect x="13.4" y="10.8" width="1" height="1" fill="#c0c0c0"/><rect x="13.4" y="13.4" width="1" height="1" fill="#c0c0c0"/><path d="M2 2 L16 16 M16 2 L2 16" stroke="#c00" stroke-width="1.1"/></svg>
<div style="position:absolute;left:542px;top:643px;width:1px;height:21px;background:#808080"></div>
<div style="position:absolute;left:543px;top:643px;width:1px;height:21px;background:#fff"></div>
<svg style="position:absolute;left:550px;top:644px;" width="18" height="18" viewBox="0 0 18 18"><path d="M2 3 H9 V9 H2Z M8 9 H15 V15 H8Z" fill="#8a8a8a"/><path d="M9 3 L15 9" stroke="#fff"/></svg>
<div style="position:absolute;left:20px;top:696px;width:1px;height:6px;background:#a0a0a0"></div>
<div style="position:absolute;left:21px;top:696px;width:1px;height:6px;background:#fff"></div>
<div style="position:absolute;left:1011px;top:696px;width:1px;height:6px;background:#a0a0a0"></div>
<div style="position:absolute;left:1012px;top:696px;width:1px;height:6px;background:#fff"></div>
<div style="position:absolute;left:4px;top:696px;width:16px;height:6px;background:#d8d8d0"></div>
<div style="position:absolute;left:1013px;top:696px;width:17px;height:6px;background:#d8d8d0"></div>
<div style="position:absolute;left:4px;top:695px;width:1025px;height:1px;background:#808080"></div>
<div style="position:absolute;left:9px;top:671px;width:298px;height:23px;border-top:1px solid #808080;border-left:1px solid #808080;border-right:1px solid #fff;border-bottom:1px solid #fff"></div>
<div style="position:absolute;left:310px;top:671px;width:294px;height:23px;border-top:1px solid #808080;border-left:1px solid #808080;border-right:1px solid #fff;border-bottom:1px solid #fff"></div>
<div style="position:absolute;left:608px;top:671px;width:52px;height:23px;border-top:1px solid #808080;border-left:1px solid #808080;border-right:1px solid #fff;border-bottom:1px solid #fff"></div>
<div style="position:absolute;left:663px;top:671px;width:20px;height:23px;border-top:1px solid #808080;border-left:1px solid #808080;border-right:1px solid #fff;border-bottom:1px solid #fff"></div>
<div style="position:absolute;left:687px;top:671px;width:195px;height:23px;border-top:1px solid #808080;border-left:1px solid #808080;border-right:1px solid #fff;border-bottom:1px solid #fff"></div>
<div style="position:absolute;left:885px;top:671px;width:139px;height:23px;border-top:1px solid #808080;border-left:1px solid #808080;border-right:1px solid #fff;border-bottom:1px solid #fff"></div>
<div style="position:absolute;left:10px;top:676px;font-size:13px;line-height:13px;color:#000;white-space:nowrap;letter-spacing:0.75px;">Textrahmen 'periodis...' markiert</div>
<svg style="position:absolute;left:317px;top:674px;" width="16" height="12" viewBox="0 0 16 12"><path d="M3 1 V8 M0 4 H6" stroke="#00007f" stroke-width="1"/><rect x="3.5" y="4.5" width="11" height="6" fill="none" stroke="#000" stroke-dasharray="1 1"/></svg>
<div style="position:absolute;left:338px;top:676px;font-size:13px;line-height:13px;color:#000;white-space:nowrap;letter-spacing:0.9px;">4.80 / 6.47</div>
<svg style="position:absolute;left:462px;top:673px;" width="16" height="14" viewBox="0 0 16 14"><rect x="3.5" y="2.5" width="10" height="9" fill="none" stroke="#000" stroke-dasharray="1 1"/><path d="M1 6 V10 M6 0.5 H10" stroke="#000" stroke-width="1"/></svg>
<div style="position:absolute;left:483px;top:676px;font-size:13px;line-height:13px;color:#000;white-space:nowrap;letter-spacing:0.9px;">3.76 x 1.20</div>
<div style="position:absolute;left:618px;top:676px;font-size:13px;line-height:13px;color:#000;white-space:nowrap;letter-spacing:0.6px;">108%</div>
<div style="position:absolute;left:688px;top:676px;font-size:13px;line-height:13px;color:#000;white-space:nowrap;letter-spacing:0.75px;">Seite 1 / 2</div>
<div style="position:absolute;left:887px;top:676px;font-size:13px;line-height:13px;color:#000;white-space:nowrap;letter-spacing:0.65px;width:136px;overflow:hidden;">Sachstrukturdiagramm</div>
</body></html>
